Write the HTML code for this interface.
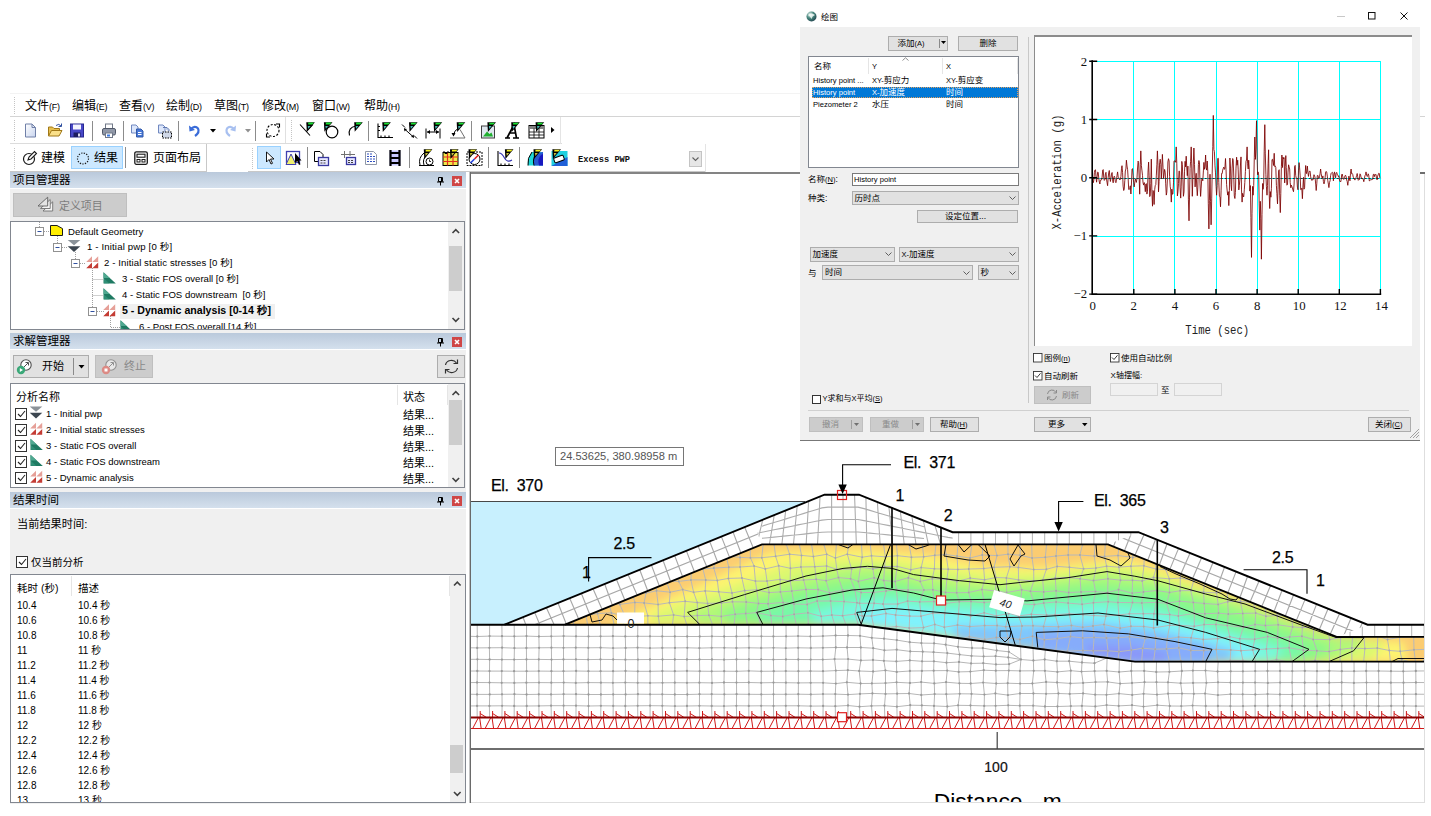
<!DOCTYPE html>
<html lang="zh-CN">
<head>
<meta charset="utf-8">
<title>GeoStudio</title>
<style>
*{box-sizing:border-box}
html,body{margin:0;padding:0}
body{width:1431px;height:816px;position:relative;overflow:hidden;background:#fff;
 font-family:"Liberation Sans","Noto Sans CJK SC",sans-serif;font-size:11px;color:#000}
.abs{position:absolute}
.t{position:absolute;white-space:nowrap;line-height:1}
.hdr{position:absolute;left:10px;width:456px;height:17px;background:linear-gradient(#bac9db,#d4e0ed 94%,#fff 94%);}
.hdr .t{left:3px;top:3px;font-size:11.5px}
.close{position:absolute;left:442px;top:4px;width:10px;height:10px;background:#cf4646}
.pin{position:absolute;left:427px;top:5px;width:7px;height:9px}
.box{position:absolute;background:#fff;border:1px solid #828790}
.btn{position:absolute;background:#e1e1e1;border:1px solid #adadad}
.btn.dis{background:#cccccc;border-color:#bfbfbf;color:#838383}
.sb{position:absolute;background:#f0f0f0}
.thumb{position:absolute;background:#cdcdcd}
.sep{position:absolute;width:1px;background:#a0a0a0}
.grip{position:absolute;width:1px;border-left:1px dotted #c4c4c4}
#dlg small{font-size:7.5px}
</style>
</head>
<body>
<!-- ===== main window: menu + toolbars ===== -->
<div class="abs" style="left:10px;top:93px;width:1421px;height:79px;background:#fff"></div>
<div class="abs" style="left:10px;top:93px;width:1415px;height:1px;background:#f3f3f3"></div>
<div class="abs" style="left:10px;top:116px;width:1415px;height:1px;background:#d4d4d4"></div>
<div class="abs" style="left:10px;top:143px;width:552px;height:1px;background:#dcdcdc"></div>
<div class="abs" style="left:10px;top:171px;width:197px;height:1px;background:#c8c8c8"></div>
<div class="abs" style="left:206px;top:144px;width:1px;height:28px;background:#c8c8c8"></div>
<div class="abs" style="left:248px;top:171px;width:458px;height:1px;background:#c8c8c8"></div>
<div class="abs" style="left:560px;top:117px;width:1px;height:27px;background:#e4e4e4"></div>
<div class="abs" style="left:705px;top:144px;width:1px;height:28px;background:#e4e4e4"></div>
<div class="grip" style="left:14px;top:97px;height:17px"></div>
<div class="grip" style="left:14px;top:120px;height:21px"></div>
<div class="grip" style="left:14px;top:148px;height:21px"></div>
<div class="grip" style="left:291px;top:120px;height:21px"></div>
<div class="grip" style="left:252px;top:148px;height:21px"></div>
<div id="menu" style="font-size:12px">
<span class="t" style="left:25px;top:100px">文件<small>(F)</small></span>
<span class="t" style="left:72px;top:100px">编辑<small>(E)</small></span>
<span class="t" style="left:119px;top:100px">查看<small>(V)</small></span>
<span class="t" style="left:166px;top:100px">绘制<small>(D)</small></span>
<span class="t" style="left:214px;top:100px">草图<small>(T)</small></span>
<span class="t" style="left:262px;top:100px">修改<small>(M)</small></span>
<span class="t" style="left:312px;top:100px">窗口<small>(W)</small></span>
<span class="t" style="left:364px;top:100px">帮助<small>(H)</small></span>
</div>
<style>#menu small{font-size:9px;letter-spacing:-.2px}</style>
<!-- ===== toolbar icons ===== -->
<svg class="abs" style="left:0;top:116px" width="720" height="56" viewBox="0 116 720 56" shape-rendering="auto">
<defs>
<g id="pg"><path d="M0,0 H8.600 L0.500,9.600 Z" fill="#000"/><path d="M2,0.400 H7.600 L6,2.300 H1.800 Z" fill="#18e030"/><path d="M1.500,3.800 H4.300 L1.900,6.600 Z" fill="#48b8b8"/></g>
<g id="py"><path d="M0,0 H8.600 L0.500,9.600 Z" fill="#000"/><path d="M2,0.400 H7.600 L6,2.300 H1.800 Z" fill="#f4f020"/><path d="M1.500,3.800 H4.300 L1.900,6.600 Z" fill="#c8c040"/></g>
<linearGradient id="gdoc" x1="0" y1="0" x2="1" y2="1"><stop offset="0" stop-color="#fff"/><stop offset="1" stop-color="#c8d4ee"/></linearGradient>
</defs>
<!-- row 1 -->
<g transform="translate(22,122.5)"><path d="M3.5,1.5 H10 L13.5,5 V14.5 H3.5 Z" fill="url(#gdoc)" stroke="#7080a8" stroke-width="1"/><path d="M10,1.5 V5 H13.5" fill="none" stroke="#7080a8"/></g>
<g transform="translate(47,122.5)"><path d="M1.5,13.5 V4.5 H5.5 L7,6 H12.5 V8" fill="#e8c050" stroke="#a07818"/><path d="M1.5,13.5 L4.5,8 H15 L12,13.5 Z" fill="#fae08a" stroke="#a07818"/><path d="M9,3 Q12,0.5 14,3.5 M14.5,1 V4 H11.5" fill="none" stroke="#3050a0" stroke-width="1"/></g>
<g transform="translate(69,122.5)"><rect x="1.5" y="1.5" width="13" height="13" fill="#4848c8" stroke="#282890"/><rect x="4" y="2" width="8" height="5" fill="#f4f4ff"/><rect x="4.5" y="10" width="7" height="4.5" fill="#1c1c60"/><rect x="9" y="11" width="2" height="3" fill="#dcdcf0"/></g>
<line x1="92.5" y1="121" x2="92.5" y2="141" stroke="#8c8c8c"/>
<g transform="translate(101,122.5)"><rect x="4.5" y="1.5" width="7" height="5" fill="#fff" stroke="#707888"/><rect x="1.5" y="6" width="13" height="6.5" rx="1.5" fill="#9098a8" stroke="#505868"/><rect x="4.5" y="10.5" width="7" height="4.5" fill="#fff" stroke="#707888"/><rect x="6" y="12" width="3" height="2" fill="#3878e0"/></g>
<line x1="123.5" y1="121" x2="123.5" y2="141" stroke="#8c8c8c"/>
<g transform="translate(129,122.5)"><path d="M2.5,2.5 H7 L9,4.5 V10.5 H2.5 Z" fill="#dce6fa" stroke="#7088c0"/><path d="M7.5,6.5 H12 L14,8.5 V14.5 H7.5 Z" fill="#4878d8" stroke="#3058a8"/><path d="M9,10 H12.5 M9,12 H12.5" stroke="#fff"/></g>
<g transform="translate(157,122.5)"><path d="M1.5,2.5 H6 L8,4.5 V10.5 H1.5 Z" fill="#dce6fa" stroke="#7088c0"/><path d="M6,5 H10 L12,7 V9" fill="#b8c8e8" stroke="#6078b0"/><rect x="5.5" y="9.5" width="9" height="6" fill="#d0d8e8" stroke="#000" stroke-dasharray="1.5 1"/></g>
<line x1="178.5" y1="121" x2="178.5" y2="141" stroke="#8c8c8c"/>
<g transform="translate(187,122.5)"><path d="M4,6.5 Q8,2.5 11,6 Q13,10 8,13.5" fill="none" stroke="#3a6cd8" stroke-width="2.2"/><path d="M2,3 L2.5,9 L8,7.5 Z" fill="#3a6cd8"/></g>
<path d="M210,129 h6 l-3,3.5 z" fill="#000"/>
<g transform="translate(222,122.5)"><path d="M12,6.5 Q8,2.5 5,6 Q3,10 8,13.5" fill="none" stroke="#a8c0f0" stroke-width="2.2"/><path d="M14,3 L13.5,9 L8,7.5 Z" fill="#a8c0f0"/></g>
<path d="M245,129 h6 l-3,3.5 z" fill="#909090"/>
<line x1="255.5" y1="121" x2="255.5" y2="141" stroke="#8c8c8c"/>
<g transform="translate(265,122.5)"><circle cx="8" cy="8" r="6" fill="none" stroke="#000" stroke-width="1.1" stroke-dasharray="2 1.6"/><path d="M11,1.5 h3.5 v3.5 M5,14.5 H1.5 V11" fill="none" stroke="#000" stroke-width="1.1"/></g>
<line x1="285.500" y1="117" x2="285.500" y2="143" stroke="#e0e0e0"/>
<g transform="translate(299,122.5)"><path d="M1,2 L11,13 M7.5,9 L14,2" stroke="#000" stroke-width="1.1" fill="none"/><use href="#pg" x="7.3" y="-0.3"/></g>
<g transform="translate(324,122.5)"><circle cx="8" cy="9.5" r="5.8" fill="none" stroke="#000" stroke-width="1.2"/><use href="#pg" x="-0.1" y="-0.3"/></g>
<g transform="translate(347,122.5)"><path d="M2.5,13 Q0.5,5 9,3.5" stroke="#000" stroke-width="1.1" fill="none"/><use href="#pg" x="7.2" y="-0.3"/></g>
<line x1="368.500" y1="121" x2="368.500" y2="141" stroke="#8c8c8c"/>
<g transform="translate(377,122.5)"><path d="M1,1 V15 H16 M4,15 v-2 M8,15 v-2 M12,15 v-2 M1,4 h2 M1,8 h2" stroke="#000" stroke-width="1.1" fill="none"/><use href="#pg" x="5.3" y="-0.2"/></g>
<g transform="translate(401,122.5)"><path d="M1,2 L4,5 M13,13 L16,16 M3,6 L13,15" stroke="#000" fill="none"/><path d="M3,6 l3,.5 l-2.5,2.5 z M13,15 l-3,-.5 l2.500,-2.500 z" fill="#000"/><use href="#pg" x="8" y="-0.2"/></g>
<g transform="translate(425,122.5)"><path d="M1,6 V16 M15,6 V16 M2,9.500 H14" stroke="#000" fill="none"/><path d="M2,9.500 l3,-2 v4 z M14,9.500 l-3,-2 v4 z" fill="#000"/><use href="#pg" x="8.6" y="-0.2"/></g>
<g transform="translate(449,122.5)"><path d="M1,15.500 H16 L11,7" stroke="#707070" fill="none"/><path d="M9,6 Q5,8 4.500,13" stroke="#000" fill="none"/><path d="M4.500,14 l-2,-3.500 h4 z" fill="#000"/><use href="#pg" x="7.7" y="-0.2"/></g>
<line x1="471.500" y1="121" x2="471.500" y2="141" stroke="#8c8c8c"/>
<g transform="translate(480,122.5)"><rect x="1.500" y="3.500" width="13" height="12" fill="#e0e8f0" stroke="#404040"/><path d="M3,14 L7,9 L9.500,11.500 L11.500,10 L13,14 Z" fill="#20b030"/><use href="#pg" x="7.4" y="-0.2"/></g>
<g transform="translate(504,122.5)"><path d="M1,15.500 h5 M9,15.500 h6 M3,15.500 L10,2 L12.500,15.500 M5.500,10.500 h6" stroke="#000" stroke-width="1.700" fill="none"/><use href="#pg" x="7.2" y="-0.2"/></g>
<g transform="translate(528,122.5)"><rect x="1" y="3" width="15" height="12.500" fill="#fff" stroke="#000"/><rect x="1.500" y="3.500" width="14" height="3" fill="#808080"/><path d="M1,9.500 h15 M1,12.500 h15 M6,6 v9.500 M11,6 v9.500" stroke="#000" stroke-width=".8"/><use href="#pg" x="7.6" y="-0.2"/></g>
<path d="M551,127 l3.500,3 l-3.500,3 z" fill="#000"/>
<!-- row 2 -->
<rect x="71.500" y="146.500" width="51" height="22" fill="#cce8ff" stroke="#99d1ff"/>
<g transform="translate(22,150)"><circle cx="7" cy="9" r="5.500" fill="none" stroke="#1a1a1a" stroke-width="1.200"/><path d="M6,10 L7,7 L12.500,1.500 L14.500,3.500 L9,9 Z" fill="#fff" stroke="#1a1a1a" stroke-width="1.100"/></g>
<circle cx="83" cy="158.500" r="5.500" fill="none" stroke="#1a1a1a" stroke-width="1.200" stroke-dasharray="1.300 1.300"/>
<line x1="125.500" y1="147" x2="125.500" y2="168" stroke="#8c8c8c"/>
<g transform="translate(133,150)"><rect x="1.800" y="1.800" width="12.500" height="12.500" rx="1.500" fill="#fff" stroke="#1a1a1a" stroke-width="1.300"/><rect x="4" y="4.200" width="8" height="3" fill="none" stroke="#1a1a1a" stroke-width="1.100"/><rect x="4" y="9.500" width="3" height="2.500" fill="none" stroke="#1a1a1a"/><rect x="9" y="9.500" width="3" height="2.500" fill="none" stroke="#1a1a1a"/></g>
<rect x="257.500" y="146.500" width="23" height="22" fill="#cce8ff" stroke="#99d1ff"/>
<g transform="translate(261,150)"><path d="M5.500,2 V12 L8,9.500 L10,14 L11.500,13.300 L9.500,9 H13 Z" fill="#fff" stroke="#000" stroke-width=".9"/></g>
<g transform="translate(285,150)"><rect x="1.500" y="1.500" width="13" height="11" fill="#fff" stroke="#4040b0" stroke-width="1.300"/><path d="M1,14.500 L6,4 L11,14.500 Z" fill="#f0f070" stroke="#4040b0"/><path d="M10,3 V13 L12.300,11 L14,15 L15.500,14.300 L13.800,10.500 H16.500 Z" fill="#000"/></g>
<line x1="307.500" y1="147" x2="307.500" y2="168" stroke="#8c8c8c"/>
<g transform="translate(313,150)"><path d="M1.500,1.500 H7 L10,4.500 V11.500 H1.500 Z" fill="#fff" stroke="#000"/><rect x="5.500" y="7.500" width="10" height="8" fill="#e8e8ff" stroke="#3838a0" stroke-width="1.300"/><path d="M7.500,10.500 h6 M7.500,13 h6" stroke="#404040" stroke-dasharray="2 1"/></g>
<g transform="translate(340,150)"><path d="M1,4.500 H15 M4.500,1 V8 M10,1 V6" stroke="#707070"/><rect x="6.500" y="7.500" width="9" height="7" fill="#e8e8ff" stroke="#3838a0" stroke-width="1.300"/><path d="M8,10.500 h6 M8,12.500 h6" stroke="#404040" stroke-dasharray="2 1"/></g>
<g transform="translate(363,150)"><path d="M2.500,1.500 H10.500 L13.500,4.500 V14.500 H2.500 Z" fill="#fff" stroke="#9098a8"/><path d="M4,4 h5 M4,6.500 h8 M4,9 h8 M4,11.500 h8" stroke="#3050c0" stroke-dasharray="2 1"/></g>
<g transform="translate(387,150)"><rect x="2.500" y="0.500" width="11" height="15" fill="#c8c8ff"/><path d="M3.500,0 V16 M12.500,0 V16" stroke="#000" stroke-width="2.200"/><path d="M4,3 H12 M4,8 H12 M4,13 H12" stroke="#000" stroke-width="1.800"/></g>
<line x1="409.500" y1="147" x2="409.500" y2="168" stroke="#8c8c8c"/>
<g transform="translate(418,150)"><path d="M2,15 Q0,8 6,3 M6,15 Q4,9 9,5 M1,15.500 H16" stroke="#000" fill="none"/><circle cx="11.500" cy="11.500" r="3.500" fill="#fff" stroke="#000"/><path d="M11.500,9.500 v2 h1.500" stroke="#000" fill="none" stroke-width=".8"/><use href="#py" x="5.8" y="-0.7"/></g>
<g transform="translate(442,150)"><rect x="1" y="2.500" width="15" height="13" fill="#f0e84a" stroke="#000"/><path d="M1,7 H16 M1,11.500 H16 M5.500,2.500 V15.500 M11,2.500 V15.500" stroke="#e03020" stroke-width="1.200"/><path d="M1,2 h2 v1.500 h2 v-1.500 h2" stroke="#000" fill="none"/><use href="#py" x="8" y="-0.7"/></g>
<g transform="translate(466,150)"><rect x="1" y="2" width="15" height="13.500" fill="#fff" stroke="#000" stroke-dasharray="2 1"/><circle cx="8.500" cy="9" r="5.500" fill="none" stroke="#000"/><path d="M4.500,13 L8.500,9" stroke="#2040e0" stroke-width="1.600"/><path d="M8.500,9 L12.500,5" stroke="#e02020" stroke-width="1.600"/><use href="#py" x="2.5" y="-0.7"/></g>
<line x1="488.500" y1="147" x2="488.500" y2="168" stroke="#8c8c8c"/>
<g transform="translate(497,150)"><path d="M1,1 V15.500 H16 M4,15.500 v-2 M8,15.500 v-2 M12,15.500 v-2" stroke="#000" fill="none" stroke-width="1.100"/><path d="M2,3 Q5,3 7.500,8 Q10,13 15,10" stroke="#3030b0" fill="none" stroke-width="1.100"/><use href="#py" x="7.9" y="-0.7"/></g>
<line x1="519.500" y1="147" x2="519.500" y2="168" stroke="#8c8c8c"/>
<g transform="translate(527,150)"><path d="M1,15.500 Q0,8 5,2 H16 V15.500 Z" fill="#20d8d8"/><path d="M7,15.500 Q5,8 10,3 L16,2 V15.500 Z" fill="#2858d0"/><path d="M12,15.500 Q10,9 14,5 L16,4 V15.500 Z" fill="#1818c0"/><path d="M1,15.500 Q0,8 5,2 M7,15.500 Q5,8 10,3" stroke="#000" fill="none"/><use href="#py" x="6.5" y="-0.7"/></g>
<g transform="translate(551,150)"><rect x="0.500" y="1" width="16" height="15" fill="#20d0e0"/><path d="M0.500,16 L16.500,7 V16 Z" fill="#2060d8"/><rect x="3" y="6.500" width="10" height="5" rx="1" fill="#fff" stroke="#000" transform="rotate(-20 8 9)"/><use href="#py" x="1.4" y="-0.7"/></g>
<text x="578" y="162" font-family="'Liberation Mono',monospace" font-size="9.5" font-weight="bold" textLength="52" lengthAdjust="spacingAndGlyphs" fill="#111">Excess PWP</text>
<rect x="689.500" y="151.500" width="12" height="15" fill="#e6e6e6" stroke="#c4c4c4"/>
<path d="M692.500,157.500 l3,3 l3,-3" fill="none" stroke="#606060" stroke-width="1.100"/>
</svg>
<span class="t" style="left:41px;top:152px;font-size:12px">建模</span>
<span class="t" style="left:94px;top:152px;font-size:12px">结果</span>
<span class="t" style="left:153px;top:152px;font-size:12px">页面布局</span>
<!-- ===== left docking panels ===== -->
<div class="abs" style="left:10px;top:172px;width:456px;height:632px;background:#f0f0f0"></div>
<!-- project manager -->
<div class="hdr" style="top:172px"><span class="t">项目管理器</span>
<svg class="pin" viewBox="0 0 7 9"><path d="M1.500,0.500 H5.500 V4.500 H1.500 Z M4.500,0.500 V4.500 M0,5 H7 M3.500,5 V8.500" stroke="#000" stroke-width="1" fill="none"/></svg>
<div class="close"><svg width="10" height="10" viewBox="0 0 10 10"><path d="M3,3 L7,7 M7,3 L3,7" stroke="#fff" stroke-width="1.600"/></svg></div></div>
<div class="btn dis" style="left:13px;top:193px;width:114px;height:24px"></div>
<svg class="abs" style="left:37px;top:196px" width="18" height="18" viewBox="0 0 18 18"><path d="M6,15 H15.700 V5.800 Z" fill="#f4f4f4" stroke="#707070" stroke-width=".9"/><path d="M3.500,12.500 H13.200 V3.500 Z" fill="#f4f4f4" stroke="#707070" stroke-width=".9"/><path d="M1,10 L10.700,1.200 V10 Z" fill="#e4e4e4" stroke="#606060" stroke-width=".9"/></svg>
<span class="t" style="left:59px;top:200.5px;font-size:10.9px;color:#7c7c7c">定义项目</span>
<div class="box" style="left:10px;top:221px;width:455px;height:109px;border-color:#828790;overflow:hidden" id="tree">
 <div class="sb" style="left:437px;top:0;width:17px;height:107px"></div>
 <div class="thumb" style="left:438px;top:24px;width:13px;height:45px"></div>
 <svg class="abs" style="left:437px;top:0" width="17" height="107"><path d="M4.500,11 l3.300,-3.300 l3.300,3.300 M4.500,96 l3.300,3.300 l3.300,-3.300" fill="none" stroke="#404040" stroke-width="1.600"/></svg>
 <div class="abs" style="left:109px;top:82px;width:155px;height:15px;background:#f0f0f0"></div>
 <svg class="abs" style="left:0;top:0" width="437" height="107" viewBox="11 222 437 107">
  <g stroke="#a0a0a0" stroke-dasharray="1 1" fill="none">
   <path d="M39.500,222 V227 M44,231.500 H50 M57.500,236 V243 M62,247.500 H68 M75.500,252 V259 M80,263.500 H86 M92.500,268 V307 M92.500,279.500 H103 M92.500,295.500 H103 M97,311.500 H104 M110.500,316 V327.500 H120"/>
  </g>
  <g fill="#fff" stroke="#919191"><rect x="35.500" y="227.500" width="8" height="8"/><rect x="53.500" y="243.500" width="8" height="8"/><rect x="71.500" y="259.500" width="8" height="8"/><rect x="88.500" y="307.500" width="8" height="8"/></g>
  <path d="M37.500,231.500 h4 M55.500,247.500 h4 M73.500,263.500 h4 M90.500,311.500 h4" stroke="#3050a0"/>
  <path d="M50.500,225.500 H57 L62.500,228.600 V235.500 H50.500 Z" fill="#ffee00" stroke="#1a1a1a" stroke-width="1"/>
  <g id="ic1"><path d="M67.700,240 H80.300 L74,245.300 Z" fill="#8a9299"/><path d="M67.700,246.200 H80.300 L74,252 Z" fill="#3c4650"/></g>
  <g id="ic2"><path d="M86.200,262 H92 V256.200 Z M92.400,262 H98.200 V256.200 Z" fill="#e6a098"/><path d="M86.200,268.200 H92 V262.400 Z M92.400,268.200 H98.200 V262.400 Z" fill="#c43c34"/><path d="M93.600,264.800 L96.400,262.400 H93.600 Z" fill="#fff"/></g>
  <g id="ic3"><path d="M103.500,272.300 V283.600 H115.800 Z" fill="#1e7a62"/><path d="M103.500,272.300 V278 H109.600 Z" fill="#4fa890"/><path d="M104,278.400 V283.200 H109.200 Z" fill="#2f8f76"/></g>
  <use href="#ic3" y="16"/>
  <use href="#ic2" x="17" y="48"/>
  <use href="#ic3" x="17" y="48"/>
 </svg>
 <span class="t" style="left:57px;top:5px;font-size:9.6px">Default Geometry</span>
 <span class="t" style="left:76px;top:20px;font-size:9.6px;letter-spacing:.15px">1 - Initial pwp [0 秒]</span>
 <span class="t" style="left:93px;top:36px;font-size:9.6px;letter-spacing:.1px">2 - Initial static stresses [0 秒]</span>
 <span class="t" style="left:111px;top:52px;font-size:9.6px">3 - Static FOS overall [0 秒]</span>
 <span class="t" style="left:111px;top:68px;font-size:9.6px">4 - Static FOS downstream&nbsp; [0 秒]</span>
 <span class="t" style="left:111px;top:83px;font-size:10.6px;font-weight:bold">5 - Dynamic analysis [0-14 秒]</span>
 <span class="t" style="left:128px;top:100px;font-size:9.6px">6 - Post FOS overall [14 秒]</span>
</div>
<!-- solve manager -->
<div class="hdr" style="top:333px"><span class="t">求解管理器</span>
<svg class="pin" viewBox="0 0 7 9"><path d="M1.500,0.500 H5.500 V4.500 H1.500 Z M4.500,0.500 V4.500 M0,5 H7 M3.500,5 V8.500" stroke="#000" stroke-width="1" fill="none"/></svg>
<div class="close"><svg width="10" height="10" viewBox="0 0 10 10"><path d="M3,3 L7,7 M7,3 L3,7" stroke="#fff" stroke-width="1.600"/></svg></div></div>
<div class="btn" style="left:13px;top:355px;width:76px;height:23px"></div>
<div class="abs" style="left:73px;top:358px;width:1px;height:17px;background:#8a8a8a"></div>
<svg class="abs" style="left:13px;top:355px" width="80" height="23" viewBox="13 355 80 23"><circle cx="26" cy="365" r="5.200" fill="#fff" stroke="#505050" stroke-width="1.100"/><path d="M24,367 L28,363 M25.500,362.500 H28.500 V365.500" stroke="#505050" fill="none"/><circle cx="21" cy="370" r="4.2" fill="#3aa878"/><path d="M19.800,368 V372 L23,370 Z" fill="#fff"/><path d="M78.500,365 h6 l-3,3.500 z" fill="#000"/></svg>
<span class="t" style="left:42px;top:361px;font-size:11px">开始</span>
<div class="btn dis" style="left:95px;top:355px;width:58px;height:23px"></div>
<svg class="abs" style="left:95px;top:355px" width="30" height="23" viewBox="95 355 30 23"><circle cx="111" cy="365" r="5.200" fill="#e8e8e8" stroke="#909090" stroke-width="1.100"/><path d="M109,367 L113,363 M110.500,362.500 H113.500 V365.500" stroke="#909090" fill="none"/><circle cx="106" cy="370" r="4.2" fill="#dc8a84"/><rect x="104.500" y="368.500" width="3" height="3" fill="#fff"/></svg>
<span class="t" style="left:124px;top:361px;font-size:11px;color:#8a8a8a">终止</span>
<div class="btn" style="left:437px;top:355px;width:28px;height:23px"></div>
<svg class="abs" style="left:439px;top:355px" width="25" height="23" viewBox="0 0 25 23"><path d="M6.500,10 A6,5.500 0 0 1 17.500,8 M18.500,13 A6,5.500 0 0 1 7.500,15" fill="none" stroke="#303030" stroke-width="1.200"/><path d="M18.500,4.500 V8.500 H14.500 M6.500,18.500 V14.500 H10.500" fill="none" stroke="#303030" stroke-width="1.200"/></svg>
<div class="box" style="left:10px;top:383px;width:455px;height:105px;overflow:hidden" id="solve">
 <div class="sb" style="left:437px;top:0;width:17px;height:103px"></div>
 <div class="thumb" style="left:438px;top:16px;width:13px;height:45px"></div>
 <svg class="abs" style="left:437px;top:0" width="17" height="103"><path d="M4.500,11 l3.300,-3.300 l3.300,3.300 M4.500,94 l3.300,3.300 l3.300,-3.300" fill="none" stroke="#404040" stroke-width="1.600"/></svg>
 <div class="abs" style="left:386px;top:1px;width:1px;height:20px;background:#e5e5e5"></div>
 <div class="abs" style="left:436px;top:1px;width:1px;height:20px;background:#e5e5e5"></div>
 <span class="t" style="left:5px;top:8px;font-size:11px">分析名称</span>
 <span class="t" style="left:392px;top:8px;font-size:11px">状态</span>
 <svg class="abs" style="left:0;top:0" width="60" height="103" viewBox="11 384 60 103">
  <g id="cb"><rect x="15.500" y="408.500" width="11" height="11" fill="#fff" stroke="#333"/><path d="M18,414 l2.500,2.500 l4.500,-5.500" fill="none" stroke="#222" stroke-width="1.100"/></g>
  <use href="#cb" y="16"/><use href="#cb" y="32"/><use href="#cb" y="48"/><use href="#cb" y="64"/>
  <use href="#ic1" x="-38" y="166.500"/>
  <use href="#ic2" x="-56" y="166.500"/>
  <use href="#ic3" x="-73" y="166.500"/>
  <use href="#ic3" x="-73" y="182.500"/>
  <use href="#ic2" x="-56" y="214.500"/>
 </svg>
 <span class="t" style="left:35px;top:25px;font-size:9.5px">1 - Initial pwp</span>
 <span class="t" style="left:35px;top:41px;font-size:9.5px">2 - Initial static stresses</span>
 <span class="t" style="left:35px;top:57px;font-size:9.5px">3 - Static FOS overall</span>
 <span class="t" style="left:35px;top:73px;font-size:9.5px">4 - Static FOS downstream</span>
 <span class="t" style="left:35px;top:89px;font-size:9.5px">5 - Dynamic analysis</span>
 <span class="t" style="left:392px;top:26px;font-size:11px">结果...</span>
 <span class="t" style="left:392px;top:42px;font-size:11px">结果...</span>
 <span class="t" style="left:392px;top:58px;font-size:11px">结果...</span>
 <span class="t" style="left:392px;top:74px;font-size:11px">结果...</span>
 <span class="t" style="left:392px;top:90px;font-size:11px">结果...</span>
</div>
<!-- result times -->
<div class="hdr" style="top:492px"><span class="t">结果时间</span>
<svg class="pin" viewBox="0 0 7 9"><path d="M1.500,0.500 H5.500 V4.500 H1.500 Z M4.500,0.500 V4.500 M0,5 H7 M3.500,5 V8.500" stroke="#000" stroke-width="1" fill="none"/></svg>
<div class="close"><svg width="10" height="10" viewBox="0 0 10 10"><path d="M3,3 L7,7 M7,3 L3,7" stroke="#fff" stroke-width="1.600"/></svg></div></div>
<span class="t" style="left:17px;top:518.5px;font-size:11.2px">当前结果时间:</span>
<svg class="abs" style="left:16px;top:556px" width="13" height="13"><rect x=".5" y=".5" width="11" height="11" fill="#fff" stroke="#333"/><path d="M3,6 l2.500,2.500 l4.500,-5.500" fill="none" stroke="#222" stroke-width="1.100"/></svg>
<span class="t" style="left:31px;top:557px;font-size:10.500px">仅当前分析</span>
<div class="box" style="left:10px;top:574px;width:456px;height:229px;overflow:hidden" id="times">
 <div class="sb" style="left:439px;top:0;width:16px;height:227px"></div>
 <div class="thumb" style="left:439px;top:170px;width:13px;height:28px"></div>
 <svg class="abs" style="left:438px;top:0" width="17" height="227"><path d="M5,10.500 l3.300,-3.300 l3.300,3.300 M5,217 l3.300,3.300 l3.300,-3.300" fill="none" stroke="#404040" stroke-width="1.600"/></svg>
 <div class="abs" style="left:60px;top:1px;width:1px;height:20px;background:#e5e5e5"></div>
 <div class="abs" style="left:438px;top:1px;width:1px;height:20px;background:#e5e5e5"></div>
 <span class="t" style="left:6px;top:8px;font-size:10.500px">耗时 (秒)</span>
 <span class="t" style="left:67px;top:8px;font-size:10.500px">描述</span>
 <div id="trows" style="font-size:10px">
 <span class="t" style="left:6px;top:26px">10.4</span><span class="t" style="left:67px;top:26px">10.4 秒</span>
 <span class="t" style="left:6px;top:41px">10.6</span><span class="t" style="left:67px;top:41px">10.6 秒</span>
 <span class="t" style="left:6px;top:56px">10.8</span><span class="t" style="left:67px;top:56px">10.8 秒</span>
 <span class="t" style="left:6px;top:71px">11</span><span class="t" style="left:67px;top:71px">11 秒</span>
 <span class="t" style="left:6px;top:86px">11.2</span><span class="t" style="left:67px;top:86px">11.2 秒</span>
 <span class="t" style="left:6px;top:101px">11.4</span><span class="t" style="left:67px;top:101px">11.4 秒</span>
 <span class="t" style="left:6px;top:116px">11.6</span><span class="t" style="left:67px;top:116px">11.6 秒</span>
 <span class="t" style="left:6px;top:131px">11.8</span><span class="t" style="left:67px;top:131px">11.8 秒</span>
 <span class="t" style="left:6px;top:146px">12</span><span class="t" style="left:67px;top:146px">12 秒</span>
 <span class="t" style="left:6px;top:161px">12.2</span><span class="t" style="left:67px;top:161px">12.2 秒</span>
 <span class="t" style="left:6px;top:176px">12.4</span><span class="t" style="left:67px;top:176px">12.4 秒</span>
 <span class="t" style="left:6px;top:191px">12.6</span><span class="t" style="left:67px;top:191px">12.6 秒</span>
 <span class="t" style="left:6px;top:206px">12.8</span><span class="t" style="left:67px;top:206px">12.8 秒</span>
 <span class="t" style="left:6px;top:221px">13</span><span class="t" style="left:67px;top:221px">13 秒</span>
 </div>
</div>
<!-- ===== drawing canvas ===== -->
<div class="abs" style="left:469px;top:172px;width:956px;height:631px;background:#fff"></div>
<div class="abs" style="left:469px;top:172px;width:956px;height:2px;background:#848484"></div>
<div class="abs" style="left:469px;top:172px;width:1px;height:631px;background:#c4c4c4"></div>
<div class="abs" style="left:470px;top:172px;width:1px;height:631px;background:#6a6a6a"></div>
<div class="abs" style="left:1424px;top:174px;width:1px;height:629px;background:#dedede"></div>
<div class="abs" style="left:471px;top:802px;width:954px;height:1px;background:#dedede"></div>
<svg class="abs" style="left:471px;top:174px" width="953" height="628" viewBox="471 174 953 628" font-family="'Liberation Sans',sans-serif">
<defs>
<clipPath id="czone"><polygon points="565.0,624.7 762.0,544.4 1108.0,544.4 1336.6,636.9 1424.0,636.9 1424.0,661.6 1134.8,661.6 858.0,624.7"/></clipPath>
<clipPath id="cup"><polygon points="504.5,624.7 753.5,523.4 762.0,544.4 565.0,624.7"/></clipPath>
<clipPath id="ccap"><polygon points="753.5,523.4 824.5,494.7 859.0,494.7 952.6,532.2 952.6,544.4 762.0,544.4"/></clipPath>
<clipPath id="cberm"><polygon points="952.6,532.2 1138.4,532.2 1108.0,544.4 952.6,544.4"/></clipPath>
<clipPath id="cdn"><polygon points="1138.4,532.2 1367.6,624.7 1337.2,636.9 1108.0,544.4"/></clipPath>
<clipPath id="crf"><polygon points="1367.6,624.7 1424.0,624.7 1424.0,636.9 1336.6,636.9"/></clipPath>
<clipPath id="cfo"><polygon points="470.0,624.7 858.0,624.7 1134.8,661.6 1424.0,661.6 1424.0,717.5 470.0,717.5"/></clipPath>
<filter id="bl" x="-20%" y="-20%" width="140%" height="140%"><feGaussianBlur stdDeviation="4.5"/></filter>
<filter id="bl2" x="-20%" y="-20%" width="140%" height="140%"><feGaussianBlur stdDeviation="3.5"/></filter>
</defs>
<polygon points="470.0,501.5 807.8,501.5 504.5,624.7 470.0,624.7" fill="#c8f0fe"/>
<path d="M471,501.5 H805" stroke="#484848" stroke-width="1" fill="none"/>
<g clip-path="url(#czone)">
<polygon points="565.0,624.7 762.0,544.4 1108.0,544.4 1336.6,636.9 1424.0,636.9 1424.0,661.6 1134.8,661.6 858.0,624.7" fill="#fbcc72"/>
<g filter="url(#bl)">
<polygon points="606.0,624.7 700.0,585.0 770.0,552.0 860.0,549.0 930.0,555.0 985.0,566.0 1050.0,567.0 1100.0,561.0 1132.0,560.0 1165.0,570.0 1235.0,598.0 1300.0,624.0 1336.6,638.0 1375.0,640.0 1404.0,642.0 1408.0,661.6 1134.8,661.6 858.0,624.7" fill="#fdf470"/>
<polygon points="650.0,624.7 655.0,612.0 720.0,590.0 790.0,564.0 850.0,558.5 900.0,561.0 930.0,566.0 985.0,574.0 1050.0,573.0 1105.0,566.0 1135.0,568.0 1162.0,575.0 1220.0,594.0 1270.0,612.0 1320.0,632.0 1345.0,640.0 1385.0,640.0 1380.0,652.0 1368.0,661.6 1134.8,661.6 858.0,624.7" fill="#dcf870"/>
<polygon points="687.6,612.4 744.5,594.6 806.0,576.0 843.0,568.4 867.5,566.3 892.0,568.4 913.6,574.6 959.7,580.7 1000.0,584.7 1020.8,582.4 1067.0,577.8 1107.0,571.6 1134.8,576.2 1158.0,580.8 1205.7,594.0 1245.0,604.0 1300.0,624.5 1336.0,637.5 1364.0,637.6 1353.6,650.8 1329.0,661.6 1134.8,661.6 858.0,624.7 700.0,624.7" fill="#b0f878"/>
<polygon points="720.0,612.0 780.0,594.0 830.0,582.0 870.0,577.0 900.0,581.0 930.0,588.0 1000.0,592.0 1100.0,583.0 1160.0,588.0 1220.0,605.0 1290.0,630.0 1335.0,648.0 1310.0,661.6 1134.8,661.6 858.0,624.7 730.0,624.7" fill="#8cf888"/>
<polygon points="756.8,612.4 806.0,599.0 852.0,590.0 883.0,587.8 913.6,593.0 941.3,600.0 1000.0,599.2 1027.0,600.9 1107.0,593.2 1158.0,599.3 1205.7,617.8 1267.3,632.4 1309.0,649.3 1292.0,661.6 1134.8,661.6 858.0,624.7 763.0,624.7" fill="#78f8a8"/>
<polygon points="810.0,612.0 860.0,600.0 890.0,598.0 930.0,604.0 1000.0,608.0 1100.0,603.0 1158.0,610.0 1205.0,625.0 1285.0,650.0 1272.0,661.6 1134.8,661.6 858.0,624.7 815.0,624.7" fill="#78f8dc"/>
<polygon points="856.7,612.4 892.0,608.4 929.0,611.5 1000.0,617.6 1036.0,617.0 1098.0,613.0 1158.0,620.0 1205.7,632.4 1259.6,649.3 1252.0,661.6 1134.8,661.6 861.4,624.7" fill="#80f2fc"/>
<polygon points="950.0,626.0 1036.0,625.0 1100.0,622.0 1160.0,630.0 1235.0,650.0 1228.0,661.6 1134.8,661.6 960.0,640.0" fill="#80c6fc"/>
</g><g filter="url(#bl2)">
<polygon points="1036.2,632.4 1082.4,630.8 1128.7,633.9 1175.0,641.6 1212.0,649.3 1205.7,661.6 1134.8,661.6 1037.8,648.5" fill="#86acfb"/>
<polygon points="1085.0,645.0 1130.0,646.0 1168.0,654.0 1165.0,661.6 1134.8,661.6 1090.0,655.5" fill="#8a98f9"/>
</g></g>
<g clip-path="url(#cfo)"><path d="M464.8,624.7 L464.8,636.2 L464.9,647.7 L464.9,659.4 L464.7,671.1 L464.7,682.7 L464.7,694.1 L464.8,706 L464.8,717.5 M477.2,624.7 L477.3,636.5 L477.2,647.9 L477.4,659.3 L477.3,671 L477.1,682.5 L477.1,694.4 L477.1,705.9 L477.2,717.5 M489.6,624.7 L489.6,636.1 L489.4,647.8 L489.6,659.5 L489.5,671.1 L489.5,682.6 L489.7,694.4 L489.4,705.9 L489.6,717.5 M501.9,624.7 L502,636.2 L502.1,647.7 L501.9,659.6 L501.8,671.1 L501.7,682.8 L502,694.3 L502.1,705.8 L501.9,717.5 M514.2,624.7 L514.3,636.3 L514.4,648.1 L514.2,659.6 L514.1,671.2 L514.3,682.9 L514.4,694.2 L514.2,706 L514.2,717.5 M526.6,624.7 L526.5,636.1 L526.4,648 L526.5,659.4 L526.6,671.2 L526.4,682.7 L526.6,694.5 L526.7,706 L526.6,717.5 M539,624.7 L538.9,636.5 L539.1,647.8 L538.8,659.4 L538.8,671.1 L539,682.6 L538.8,694.3 L538.9,705.9 L539,717.5 M551.3,624.7 L551.3,636.3 L551.4,647.7 L551.5,659.6 L551.4,671.2 L551.3,682.7 L551.1,694.4 L551.1,705.7 L551.3,717.5 M563.7,624.7 L563.6,636.1 L563.5,647.8 L563.5,659.4 L563.5,671.2 L563.7,682.6 L563.6,694.2 L563.6,705.7 L563.7,717.5 M576,624.7 L576,636.3 L575.8,647.7 L575.9,659.4 L576.1,671 L575.8,682.9 L576,694.2 L576,705.7 L576,717.5 M588.4,624.7 L588.5,636.4 L588.3,647.8 L588.2,659.6 L588.4,671.2 L588.3,682.6 L588.5,694.5 L588.5,706 L588.4,717.5 M600.7,624.7 L600.6,636.3 L600.6,647.7 L600.5,659.4 L600.6,671.2 L600.9,682.7 L600.9,694.5 L600.9,705.8 L600.7,717.5 M613.1,624.7 L612.9,636.2 L613.1,648.1 L613.2,659.5 L613.1,671.2 L612.9,682.8 L613.2,694.4 L613.2,705.9 L613.1,717.5 M625.4,624.7 L625.3,636.4 L625.6,647.9 L625.4,659.7 L625.5,671 L625.3,682.6 L625.6,694.4 L625.3,706 L625.4,717.5 M637.8,624.7 L637.7,636.3 L637.6,647.7 L637.9,659.6 L637.8,671.3 L637.7,682.8 L637.9,694.2 L637.7,705.8 L637.8,717.5 M650.1,624.7 L650,636.3 L650,648.1 L650,659.5 L650.1,671.3 L650.1,682.9 L650.1,694.3 L650.1,705.7 L650.1,717.5 M662.5,624.7 L662.3,636.4 L662.3,647.9 L662.5,659.5 L662.4,671.1 L662.5,682.8 L662.3,694.3 L662.3,705.8 L662.5,717.5 M674.8,624.7 L674.8,636.4 L675,647.9 L674.8,659.5 L674.8,671.2 L674.8,682.7 L674.8,694.5 L674.9,706.1 L674.8,717.5 M687.2,624.7 L687.2,636.5 L687.3,647.8 L687,659.5 L687,671 L687,682.8 L687.3,694.5 L687,706 L687.2,717.5 M699.5,624.7 L699.7,636.5 L699.4,648.1 L699.5,659.5 L699.7,671.2 L699.4,682.7 L699.5,694.2 L699.4,705.8 L699.5,717.5 M711.9,624.7 L711.9,636.3 L711.7,647.8 L711.9,659.5 L711.7,671.3 L712,682.9 L711.7,694.2 L711.7,706 L711.9,717.5 M724.2,624.7 L724.2,636.5 L724.3,647.8 L724.1,659.7 L724.2,671.2 L724,682.5 L724.3,694.3 L724,706.1 L724.2,717.5 M736.6,624.7 L736.4,636.4 L736.4,648 L736.5,659.4 L736.6,671.3 L736.5,682.6 L736.6,694.2 L736.4,705.8 L736.6,717.5 M748.9,624.7 L748.8,636.2 L749,647.8 L748.9,659.4 L748.8,670.9 L748.8,682.5 L749,694.3 L748.8,705.9 L748.9,717.5 M761.3,624.7 L761.4,636.3 L761.2,648 L761.2,659.5 L761.3,671.3 L761.2,682.8 L761.3,694.4 L761.2,705.8 L761.3,717.5 M773.6,624.7 L773.4,636.4 L773.5,647.8 L773.4,659.6 L773.7,671.2 L773.5,682.6 L773.5,694.3 L773.5,705.9 L773.6,717.5 M786,624.7 L786.1,636.3 L785.8,648.1 L785.9,659.4 L785.8,671.1 L785.9,682.7 L785.8,694.3 L785.8,705.8 L786,717.5 M798.3,624.7 L798.1,636.1 L798.2,647.8 L798.3,659.5 L798.4,671.2 L798.4,682.9 L798.3,694.2 L798.5,705.8 L798.3,717.5 M810.7,624.7 L810.5,636.4 L810.8,648 L810.7,659.6 L810.5,671.1 L810.7,682.8 L810.8,694.4 L810.7,706.1 L810.7,717.5 M823,624.7 L822.9,636.1 L822.9,647.8 L822.8,659.6 L823,671.2 L823.1,682.8 L823,694.1 L823.1,706 L823,717.5 M835.4,624.7 L835.6,635.5 L835.8,647.5 L834.6,659.1 L835.8,670.6 L835.8,683.6 L835.3,694.1 L835.3,706.2 L835.4,717.5 M847.7,624.7 L848,635.5 L847.1,647.5 L848.1,659.1 L847.8,670.2 L846.9,682.3 L848,694.6 L848,705.5 L847.7,717.5 M860.1,625 L860,635.8 L860.8,647.5 L860.9,660.4 L859.2,671 L860.6,683.5 L860,693.9 L859.5,706.7 L860.1,717.5 M872.4,626.6 L871.8,637.8 L873.2,648.2 L873,660 L873.1,671.5 L871.9,683.4 L872.4,693.4 L871.5,705.9 L872.4,717.5 M884.8,628.3 L884.1,638.7 L884.4,650.3 L883.9,660.8 L885.4,670.4 L885.5,683.1 L885.5,693.9 L884.5,705.7 L884.8,717.5 M897.1,629.9 L896.8,640.1 L896.7,649.7 L896.4,661.4 L896.7,671.9 L896.6,682.3 L897.1,693.7 L896.9,706.7 L897.1,717.5 M909.5,631.6 L909.7,642.2 L910.2,651.4 L909.8,660.4 L909.9,671 L909.9,683 L909.1,693.5 L910.2,705.2 L909.5,717.5 M921.8,633.2 L921.4,643.1 L922.7,651.7 L922.1,661.3 L921.9,670.9 L921.2,682.1 L921.3,695 L921.8,705.4 L921.8,717.5 M934.2,634.9 L934.1,643.3 L933.6,652.2 L933.9,661.3 L933.7,670.7 L934.3,683.4 L934.6,694.1 L934,705.9 L934.2,717.5 M946.5,636.5 L945.7,644.7 L947.3,653.1 L946.5,662.7 L947.2,670.6 L946.1,682.2 L946.3,694.2 L947.3,706.5 L946.5,717.5 M958.9,638.1 L958,646.8 L959.6,654.6 L959,662 L958.7,671.9 L959.4,683.3 L959.7,693.8 L958.1,705.3 L958.9,717.5 M971.2,639.8 L972,648 L971.5,655.9 L971.1,663.4 L970.4,671.6 L970.7,683.5 L971.5,693.9 L970.5,705.5 L971.2,717.5 M983.6,641.4 L982.9,648.1 L983.6,656.4 L983.3,663.2 L983.7,670.2 L983.2,682.6 L984.4,694.6 L984.2,705.9 L983.6,717.5 M995.9,643.1 L996.7,650.5 L995.6,656.2 L995.9,664.4 L995.8,670.7 L996.2,683.5 L995.4,693.5 L995.6,705.8 L995.9,717.5 M1008.3,644.7 L1008.8,651.8 L1008.3,657.4 L1009.1,664.2 L1008.8,670.6 L1007.7,683.2 L1007.9,695.1 L1008.2,705.3 L1008.3,717.5 M1020.6,646.4 L1020.9,659.5 L1020,670.9 L1020.1,683.6 L1020,693.5 L1019.8,705.7 L1020.6,717.5 M1033,648 L1033.4,660.5 L1033.7,670.8 L1032.4,683.5 L1033.4,693.5 L1033.2,705.7 L1033,717.5 M1045.3,649.7 L1044.7,659.5 L1044.9,670.8 L1046.1,682 L1046.1,693.8 L1045,706.5 L1045.3,717.5 M1057.7,651.3 L1056.8,661.2 L1057.4,671.9 L1057.1,682.5 L1058.4,693.5 L1057.5,706.5 L1057.7,717.5 M1070,653 L1069.2,661.2 L1070.8,670.7 L1070.4,683.4 L1069.7,693.9 L1070.8,706.1 L1070,717.5 M1082.4,654.6 L1082,662.5 L1081.5,671.6 L1083.1,682.9 L1083.1,693.4 L1081.9,705.9 L1082.4,717.5 M1094.7,656.3 L1094.5,663.2 L1094.6,671.1 L1095.5,682.1 L1095.2,694.7 L1095.3,706.4 L1094.7,717.5 M1107.1,657.9 L1106.7,670.9 L1107.6,681.9 L1106.5,694.8 L1106.6,705.1 L1107.1,717.5 M1119.4,659.5 L1119.1,672 L1120.1,683.6 L1119,693.6 L1118.7,705.9 L1119.4,717.5 M1131.8,661.2 L1131.3,671 L1132,683 L1132.2,694.9 L1132,705.2 L1131.8,717.5 M1144.1,661.6 L1144.2,670.9 L1144.5,682.2 L1143.6,693.8 L1143.5,706.6 L1144.1,717.5 M1156.5,661.6 L1156.3,672 L1156.5,682.2 L1157,694.6 L1157.3,705.2 L1156.5,717.5 M1168.8,661.6 L1169.4,671.8 L1168,682.3 L1168.1,693.7 L1169.7,706 L1168.8,717.5 M1181.1,661.6 L1181.8,671 L1180.7,683.2 L1182,693.6 L1181.3,706.1 L1181.1,717.5 M1193.5,661.6 L1192.9,670.6 L1193.1,682.9 L1193.8,693.8 L1192.6,705.6 L1193.5,717.5 M1205.8,661.6 L1205.5,670.6 L1206.4,682.8 L1205.1,693.6 L1205.7,706 L1205.8,717.5 M1218.2,661.6 L1217.6,671.5 L1218,682.3 L1217.9,695.1 L1217.9,706 L1218.2,717.5 M1230.5,661.6 L1230.7,671.3 L1230.5,682.6 L1230.6,694.2 L1230.4,706.1 L1230.5,717.5 M1242.9,661.6 L1242.9,671.3 L1242.9,682.6 L1242.7,694.3 L1243,706.1 L1242.9,717.5 M1255.2,661.6 L1255.2,671.1 L1255.1,682.6 L1255.3,694.5 L1255.1,705.9 L1255.2,717.5 M1267.6,661.6 L1267.5,671 L1267.8,682.9 L1267.6,694.1 L1267.8,705.9 L1267.6,717.5 M1279.9,661.6 L1280.1,671 L1280.1,682.6 L1279.9,694.4 L1280.1,705.8 L1279.9,717.5 M1292.3,661.6 L1292.3,671.1 L1292.1,682.6 L1292.4,694.5 L1292.1,705.9 L1292.3,717.5 M1304.6,661.6 L1304.8,670.9 L1304.7,682.7 L1304.7,694.2 L1304.6,705.9 L1304.6,717.5 M1317,661.6 L1317,671.1 L1316.8,682.7 L1317,694.2 L1317.1,706 L1317,717.5 M1329.3,661.6 L1329.3,670.9 L1329.2,682.7 L1329.2,694.3 L1329.4,705.7 L1329.3,717.5 M1341.7,661.6 L1341.8,671.2 L1341.7,682.5 L1341.7,694.3 L1341.9,705.8 L1341.7,717.5 M1354,661.6 L1354.1,671.2 L1353.9,682.9 L1354,694.5 L1354.2,705.8 L1354,717.5 M1366.4,661.6 L1366.2,671 L1366.5,682.6 L1366.6,694.2 L1366.5,705.8 L1366.4,717.5 M1378.7,661.6 L1378.6,671 L1378.8,682.6 L1378.6,694.2 L1378.6,706.1 L1378.7,717.5 M1391.1,661.6 L1391,671.2 L1390.9,682.7 L1391.2,694.2 L1391.2,705.9 L1391.1,717.5 M1403.4,661.6 L1403.3,671.3 L1403.5,682.7 L1403.6,694.2 L1403.6,705.9 L1403.4,717.5 M1415.8,661.6 L1415.8,671 L1415.9,682.5 L1415.9,694.2 L1415.9,706.1 L1415.8,717.5 M1428.1,661.6 L1428.1,670.9 L1428,682.6 L1428.2,694.3 L1428.2,706.1 L1428.1,717.5 M464.8,636.2 L477.3,636.5 L489.6,636.1 L502,636.2 L514.3,636.3 L526.5,636.1 L538.9,636.5 L551.3,636.3 L563.6,636.1 L576,636.3 L588.5,636.4 L600.6,636.3 L612.9,636.2 L625.3,636.4 L637.7,636.3 L650,636.3 L662.3,636.4 L674.8,636.4 L687.2,636.5 L699.7,636.5 L711.9,636.3 L724.2,636.5 L736.4,636.4 L748.8,636.2 L761.4,636.3 L773.4,636.4 L786.1,636.3 L798.1,636.1 L810.5,636.4 L822.9,636.1 L835.6,635.5 L848,635.5 L860,635.8 L871.8,637.8 L884.1,638.7 L896.8,640.1 L909.7,642.2 L921.4,643.1 L934.1,643.3 L945.7,644.7 L958,646.8 L972,648 L982.9,648.1 L996.7,650.5 L1008.8,651.8 L1020.9,659.5 M464.9,647.7 L477.2,647.9 L489.4,647.8 L502.1,647.7 L514.4,648.1 L526.4,648 L539.1,647.8 L551.4,647.7 L563.5,647.8 L575.8,647.7 L588.3,647.8 L600.6,647.7 L613.1,648.1 L625.6,647.9 L637.6,647.7 L650,648.1 L662.3,647.9 L675,647.9 L687.3,647.8 L699.4,648.1 L711.7,647.8 L724.3,647.8 L736.4,648 L749,647.8 L761.2,648 L773.5,647.8 L785.8,648.1 L798.2,647.8 L810.8,648 L822.9,647.8 L835.8,647.5 L847.1,647.5 L860.8,647.5 L873.2,648.2 L884.4,650.3 L896.7,649.7 L910.2,651.4 L922.7,651.7 L933.6,652.2 L947.3,653.1 L959.6,654.6 L971.5,655.9 L983.6,656.4 L995.6,656.2 L1008.3,657.4 L1020.9,659.5 L1033.4,660.5 L1044.7,659.5 L1056.8,661.2 L1069.2,661.2 L1082,662.5 L1094.5,663.2 L1107.1,657.9 M464.9,659.4 L477.4,659.3 L489.6,659.5 L501.9,659.6 L514.2,659.6 L526.5,659.4 L538.8,659.4 L551.5,659.6 L563.5,659.4 L575.9,659.4 L588.2,659.6 L600.5,659.4 L613.2,659.5 L625.4,659.7 L637.9,659.6 L650,659.5 L662.5,659.5 L674.8,659.5 L687,659.5 L699.5,659.5 L711.9,659.5 L724.1,659.7 L736.5,659.4 L748.9,659.4 L761.2,659.5 L773.4,659.6 L785.9,659.4 L798.3,659.5 L810.7,659.6 L822.8,659.6 L834.6,659.1 L848.1,659.1 L860.9,660.4 L873,660 L883.9,660.8 L896.4,661.4 L909.8,660.4 L922.1,661.3 L933.9,661.3 L946.5,662.7 L959,662 L971.1,663.4 L983.3,663.2 L995.9,664.4 L1009.1,664.2 L1020.9,659.5 M464.7,671.1 L477.3,671 L489.5,671.1 L501.8,671.1 L514.1,671.2 L526.6,671.2 L538.8,671.1 L551.4,671.2 L563.5,671.2 L576.1,671 L588.4,671.2 L600.6,671.2 L613.1,671.2 L625.5,671 L637.8,671.3 L650.1,671.3 L662.4,671.1 L674.8,671.2 L687,671 L699.7,671.2 L711.7,671.3 L724.2,671.2 L736.6,671.3 L748.8,670.9 L761.3,671.3 L773.7,671.2 L785.8,671.1 L798.4,671.2 L810.5,671.1 L823,671.2 L835.8,670.6 L847.8,670.2 L859.2,671 L873.1,671.5 L885.4,670.4 L896.7,671.9 L909.9,671 L921.9,670.9 L933.7,670.7 L947.2,670.6 L958.7,671.9 L970.4,671.6 L983.7,670.2 L995.8,670.7 L1008.8,670.6 L1020,670.9 L1033.7,670.8 L1044.9,670.8 L1057.4,671.9 L1070.8,670.7 L1081.5,671.6 L1094.6,671.1 L1106.7,670.9 L1119.1,672 L1131.3,671 L1144.2,670.9 L1156.3,672 L1169.4,671.8 L1181.8,671 L1192.9,670.6 L1205.5,670.6 L1217.6,671.5 L1230.7,671.3 L1242.9,671.3 L1255.2,671.1 L1267.5,671 L1280.1,671 L1292.3,671.1 L1304.8,670.9 L1317,671.1 L1329.3,670.9 L1341.8,671.2 L1354.1,671.2 L1366.2,671 L1378.6,671 L1391,671.2 L1403.3,671.3 L1415.8,671 L1428.1,670.9 M464.7,682.7 L477.1,682.5 L489.5,682.6 L501.7,682.8 L514.3,682.9 L526.4,682.7 L539,682.6 L551.3,682.7 L563.7,682.6 L575.8,682.9 L588.3,682.6 L600.9,682.7 L612.9,682.8 L625.3,682.6 L637.7,682.8 L650.1,682.9 L662.5,682.8 L674.8,682.7 L687,682.8 L699.4,682.7 L712,682.9 L724,682.5 L736.5,682.6 L748.8,682.5 L761.2,682.8 L773.5,682.6 L785.9,682.7 L798.4,682.9 L810.7,682.8 L823.1,682.8 L835.8,683.6 L846.9,682.3 L860.6,683.5 L871.9,683.4 L885.5,683.1 L896.6,682.3 L909.9,683 L921.2,682.1 L934.3,683.4 L946.1,682.2 L959.4,683.3 L970.7,683.5 L983.2,682.6 L996.2,683.5 L1007.7,683.2 L1020.1,683.6 L1032.4,683.5 L1046.1,682 L1057.1,682.5 L1070.4,683.4 L1083.1,682.9 L1095.5,682.1 L1107.6,681.9 L1120.1,683.6 L1132,683 L1144.5,682.2 L1156.5,682.2 L1168,682.3 L1180.7,683.2 L1193.1,682.9 L1206.4,682.8 L1218,682.3 L1230.5,682.6 L1242.9,682.6 L1255.1,682.6 L1267.8,682.9 L1280.1,682.6 L1292.1,682.6 L1304.7,682.7 L1316.8,682.7 L1329.2,682.7 L1341.7,682.5 L1353.9,682.9 L1366.5,682.6 L1378.8,682.6 L1390.9,682.7 L1403.5,682.7 L1415.9,682.5 L1428,682.6 M464.7,694.1 L477.1,694.4 L489.7,694.4 L502,694.3 L514.4,694.2 L526.6,694.5 L538.8,694.3 L551.1,694.4 L563.6,694.2 L576,694.2 L588.5,694.5 L600.9,694.5 L613.2,694.4 L625.6,694.4 L637.9,694.2 L650.1,694.3 L662.3,694.3 L674.8,694.5 L687.3,694.5 L699.5,694.2 L711.7,694.2 L724.3,694.3 L736.6,694.2 L749,694.3 L761.3,694.4 L773.5,694.3 L785.8,694.3 L798.3,694.2 L810.8,694.4 L823,694.1 L835.3,694.1 L848,694.6 L860,693.9 L872.4,693.4 L885.5,693.9 L897.1,693.7 L909.1,693.5 L921.3,695 L934.6,694.1 L946.3,694.2 L959.7,693.8 L971.5,693.9 L984.4,694.6 L995.4,693.5 L1007.9,695.1 L1020,693.5 L1033.4,693.5 L1046.1,693.8 L1058.4,693.5 L1069.7,693.9 L1083.1,693.4 L1095.2,694.7 L1106.5,694.8 L1119,693.6 L1132.2,694.9 L1143.6,693.8 L1157,694.6 L1168.1,693.7 L1182,693.6 L1193.8,693.8 L1205.1,693.6 L1217.9,695.1 L1230.6,694.2 L1242.7,694.3 L1255.3,694.5 L1267.6,694.1 L1279.9,694.4 L1292.4,694.5 L1304.7,694.2 L1317,694.2 L1329.2,694.3 L1341.7,694.3 L1354,694.5 L1366.6,694.2 L1378.6,694.2 L1391.2,694.2 L1403.6,694.2 L1415.9,694.2 L1428.2,694.3 M464.8,706 L477.1,705.9 L489.4,705.9 L502.1,705.8 L514.2,706 L526.7,706 L538.9,705.9 L551.1,705.7 L563.6,705.7 L576,705.7 L588.5,706 L600.9,705.8 L613.2,705.9 L625.3,706 L637.7,705.8 L650.1,705.7 L662.3,705.8 L674.9,706.1 L687,706 L699.4,705.8 L711.7,706 L724,706.1 L736.4,705.8 L748.8,705.9 L761.2,705.8 L773.5,705.9 L785.8,705.8 L798.5,705.8 L810.7,706.1 L823.1,706 L835.3,706.2 L848,705.5 L859.5,706.7 L871.5,705.9 L884.5,705.7 L896.9,706.7 L910.2,705.2 L921.8,705.4 L934,705.9 L947.3,706.5 L958.1,705.3 L970.5,705.5 L984.2,705.9 L995.6,705.8 L1008.2,705.3 L1019.8,705.7 L1033.2,705.7 L1045,706.5 L1057.5,706.5 L1070.8,706.1 L1081.9,705.9 L1095.3,706.4 L1106.6,705.1 L1118.7,705.9 L1132,705.2 L1143.5,706.6 L1157.3,705.2 L1169.7,706 L1181.3,706.1 L1192.6,705.6 L1205.7,706 L1217.9,706 L1230.4,706.1 L1243,706.1 L1255.1,705.9 L1267.8,705.9 L1280.1,705.8 L1292.1,705.9 L1304.6,705.9 L1317.1,706 L1329.4,705.7 L1341.9,705.8 L1354.2,705.8 L1366.5,705.8 L1378.6,706.1 L1391.2,705.9 L1403.6,705.9 L1415.9,706.1 L1428.2,706.1" fill="none" stroke="#b6b6b6" stroke-width="1"/></g>
<g clip-path="url(#czone)"><path d="M553.4,544.4 L552.1,554.1 L555.1,566.2 L556.6,578.4 L559.1,591.6 L558.9,603.4 L561.6,613.1 L565.1,625.3 L563.2,636.4 L566.8,651.2 L568.9,661 L568.2,671.1 M565.6,544.4 L566.8,555.5 L568.6,567.6 L571.4,580.4 L569.9,592.8 L570.5,603 L573.6,613.6 L573.6,627.4 L574.9,638.2 L580.4,648.3 L578.7,661.8 L581.5,673.7 M578.7,544.4 L577.4,555.3 L579.4,566 L583.5,580.6 L584.2,589.2 L586.3,603.9 L586.1,615.6 L587.6,625.2 L587.6,636.9 L588.8,649 L593.4,662.2 L595.3,673.9 M588.6,544.4 L591.3,555.8 L593.9,567.9 L593.1,580.1 L597.6,590.1 L598.8,601 L597.5,613.5 L601.2,628.1 L602.7,637.3 L604.8,649 L603.5,663 L606.7,673.9 M602.6,544.4 L605.5,556 L606.4,568.6 L608,579.2 L608.9,591.5 L608.6,601.7 L611.4,612.9 L614.2,624.9 L611.8,636.4 L617.3,649.1 L615.3,659.5 L616.4,673.9 M614.8,544.4 L616.6,557 L615.3,568.2 L618.1,580.8 L621.6,592.8 L619.8,604.4 L625,616.4 L623,625.1 L624.5,636.1 L629.2,650.9 L629.8,662.7 L631.3,672.2 M624.7,544.4 L626.2,557.1 L628.2,567.1 L630.7,577.6 L631.4,590.3 L634.9,602.4 L634.7,616.5 L637,627.7 L639,636.1 L639.6,649.4 L642.7,660.8 L643.9,673.3 M637.6,544.4 L641.9,554.5 L643.2,566.5 L641.1,578.3 L646,593.1 L644.1,602.9 L647.8,615.8 L647.9,626.3 L650.1,639.3 L651.2,651.5 L652.8,660.3 L656.2,673.1 M649.4,544.4 L653.2,554.4 L655.4,568.6 L656.9,580 L656.5,590.8 L658.1,604.5 L658.3,616.2 L659.5,625.1 L662.1,639.6 L664.6,649.2 L667.8,660.3 L667.4,673.2 M664.5,544.4 L666,556.7 L665.7,567.1 L666.4,580.9 L670.1,592.2 L669.4,602.7 L673.6,614.9 L672.3,626.1 L677.1,637 L675.5,648.9 L679.3,662.8 L678.4,671.7 M674.6,544.4 L676.4,556.2 L677.2,567.1 L678.8,581.4 L682.7,589.6 L685.2,601.3 L684.2,616.5 L687.5,627.2 L687.4,636.8 L689.8,648.1 L689.4,661 L690.1,672.7 M689.3,544.4 L690.4,556.1 L691.6,567.7 L690.9,579.9 L693.6,592.2 L697.3,602.6 L697.3,615.6 L698.2,625.2 L701,639.5 L702.7,650.5 L704.6,662.1 L705.1,672.9 M699.5,544.4 L702.4,554.5 L702.9,568.9 L705.7,580 L705.2,590.9 L707.6,603.4 L708.9,615.3 L712.7,625 L713,639.1 L713.3,649.7 L717.4,659.6 L717,671.7 M713.8,544.4 L716,556.2 L713.8,568.1 L717.3,580.4 L718.7,591.8 L721.5,603 L721.2,616.4 L721.8,627 L724.1,639.1 L724.4,651.6 L727,659.6 L728.1,672.7 M722.8,544.4 L726,555.8 L728.8,567.2 L728.4,578.4 L732,593 L732.5,601.8 L735.2,614.2 L734.1,624.8 L738.1,639.2 L739,649.6 L740.2,660.3 L743.4,672.5 M737.8,544.4 L740.1,557.4 L740.1,567 L741.9,578 L744.7,590.6 L746.2,602 L745.7,613.6 L747.4,625 L747,638.9 L749.7,648.7 L751.3,661.3 L753.4,673.6 M750.2,544.4 L750.4,557.8 L754.1,566 L755.4,581.1 L756.7,589.8 L758.5,603.4 L756.4,612.6 L762,626.9 L760.4,636.4 L761.4,648.6 L765.7,660.8 L764.5,674.7 M763.1,544.4 L761.8,557.7 L765.3,568.9 L767,581.1 L769.1,592.6 L768,603.7 L770.9,615.6 L772,627.8 L774,637.1 L774.1,648.3 L776.8,659.6 L778.2,671.7 M774.1,544.4 L775.6,556.3 L778.7,565.8 L780.1,579.4 L780.4,591.9 L783.1,602.4 L782.7,616.4 L782.7,626.8 L786.7,636.1 L788.1,650.4 L791,660.7 L792.7,673.1 M786.3,544.4 L789.6,554.2 L790.4,568.3 L790.2,580.9 L791.8,591.1 L794,604 L794.1,614.3 L796.6,626.5 L799.8,637.2 L801.3,649.3 L801.4,660.5 L802.9,675 M799.4,544.4 L801.5,555.4 L800.9,567 L803.6,580 L806,589.4 L807.2,604.4 L807.9,612.8 L808.3,624.3 L809.3,639.7 L812.7,650.3 L815,663 L815.7,673.6 M811.6,544.4 L813.4,556.5 L814.8,566.7 L816.2,579.3 L818.2,589.6 L817.1,601 L821.2,616.3 L822.2,625.8 L824.4,639.1 L824.8,648.7 L825.1,661.1 L826.7,672.8 M823.9,544.4 L826.7,554.3 L826.6,566 L826.1,580.7 L829.6,592.9 L830.6,601 L831.8,615 L835.7,628.2 L835.2,637.6 L835,650.3 L837,660 L837.7,671.1 M836.4,544.4 L835.4,558 L836.8,569.3 L838.5,577.6 L842.6,590.2 L844.1,601.6 L842.6,615.7 L847,627.7 L848.6,636.3 L849.7,650.5 L850.4,663.1 L851,675 M848.9,544.4 L847.3,554.2 L851.6,569.1 L850.6,578.7 L854.9,589.9 L857,602.8 L855,614.1 L858.7,626.1 L860.7,636.6 L862.7,649.2 L863.5,661.9 L864,672.6 M861.5,544.4 L862.2,557.2 L860.5,567 L858.3,581.4 L861.1,592.5 L859.5,603.3 L862.3,615.9 L860.6,625.5 L859.9,639.6 L859.7,650.4 L860.6,663 L861.6,672.2 M870.3,544.4 L871.5,555.8 L872.9,569.1 L874.2,577.7 L874,592.4 L874.1,603.2 L871.5,616 L873.9,627 L874.3,637.4 L870.7,649.9 L873.8,660.2 L873.6,674.8 M883.6,544.4 L885.3,556.8 L884.6,566.6 L883.7,580.5 L886.1,591 L883,604.1 L886,613.5 L885.2,627.9 L886.5,638.1 L884.7,650.1 L883.4,660.2 L883.4,673.9 M896.5,544.4 L897.4,555.7 L897.2,566.4 L895.1,581.5 L896.5,589.6 L897.7,604 L895.6,615 L896.4,626.4 L895,636.1 L899.3,651.2 L897,661.7 L896.1,674.2 M909.1,544.4 L911.4,557.2 L910.8,569.7 L908.3,577.7 L908.1,589.9 L907.6,601.1 L909.7,616.1 L909.2,628.1 L911.2,636.3 L909.8,649.3 L907.7,663.2 L908.3,673.4 M922.3,544.4 L923.7,556.8 L921.2,567.6 L920.2,581.4 L923.9,590.1 L919.7,601.9 L921,616.2 L923.5,627.6 L919.7,639.1 L922.6,650.3 L923.8,659.6 L920.1,674.1 M935.9,544.4 L934.8,555.3 L934.4,568.8 L932.3,578.8 L932.9,589.7 L933.9,601.6 L932.8,613.2 L934.8,624.4 L935,636.8 L932,651.4 L932.8,663.1 L935.6,674.7 M944.7,544.4 L946.1,554.5 L948.2,569.2 L946.9,579.3 L945.6,592.5 L946.2,603.4 L944.7,613.5 L944.3,627.2 L946.5,636.6 L947.9,648.8 L945.9,660 L945.3,674.5 M957.9,544.4 L957.1,556.1 L957.8,569.4 L956.9,581.4 L956.7,592.8 L959.3,601.7 L958.5,613.7 L957.5,625.1 L958,640 L960.8,651.4 L956.8,660.6 L960.3,671.3 M971.9,544.4 L970,558 L968.8,569 L970.2,578.1 L968.7,592.5 L971,601.6 L970.6,616.2 L969.7,626.6 L969.3,636.7 L972.1,650.5 L969.6,659.7 L969.1,673.5 M983.2,544.4 L982.2,554.9 L983.7,568.6 L984.6,579.8 L981.9,589.5 L984.2,602.5 L984.2,612.8 L984.6,625.6 L984.7,639.5 L983.2,647.8 L985,661.3 L984.8,672.2 M994.1,544.4 L997,555.6 L994,567.3 L995.9,577.5 L995.6,591 L995.6,601.4 L996.4,615.9 L997.1,625.6 L996.4,637.5 L996.6,647.9 L997.1,663.2 L995.5,673.2 M1007.9,544.4 L1008,554.2 L1009.9,566.7 L1006.4,577.9 L1006.7,592.5 L1005.7,601.3 L1008.7,613.4 L1005.7,626.7 L1008.1,638.1 L1008.7,648.1 L1009.4,662.3 L1005.8,671.6 M1020.1,544.4 L1020.1,555.2 L1018.4,567.4 L1018.5,579.9 L1021.7,589.8 L1020.4,603.9 L1018.6,615.9 L1022,625.9 L1019.8,639.4 L1020.2,649.3 L1022,662.5 L1019.4,672.1 M1031.7,544.4 L1032.1,558 L1033.7,569.5 L1033.8,580.9 L1030.4,591.3 L1034.4,604.6 L1031.3,614.3 L1033,625.8 L1032.5,636.3 L1032.1,649.7 L1030.3,660 L1034.5,674.2 M1046.6,544.4 L1045.3,557.3 L1046.4,569.3 L1042.7,580.1 L1043.7,591.9 L1043.7,603.1 L1046.6,615.1 L1043.6,626.4 L1044.4,639.8 L1043.8,648.9 L1045.3,659.9 L1045.1,674.9 M1057.1,544.4 L1056,556 L1057.1,566.4 L1055.3,578 L1056.1,590.8 L1056.1,601.9 L1055.2,614.8 L1058.5,626.7 L1057.3,638.6 L1055.7,650.5 L1056.8,661.6 L1057.5,673 M1068.5,544.4 L1068.2,555 L1069.4,567.3 L1069.7,577.5 L1068.7,592.6 L1068.1,603.1 L1069.3,613.7 L1071.4,625.5 L1070.5,636.6 L1067.4,651.2 L1069,659.6 L1068.8,672.9 M1082.6,544.4 L1079.9,555 L1083.6,568.8 L1080.1,578.8 L1081,591.9 L1082.1,604.3 L1083,614.7 L1082.7,627.3 L1082.7,637.9 L1082.9,650.5 L1083.4,659.9 L1083.2,671.1 M1095.1,544.4 L1094.3,556.1 L1095.9,568.1 L1093.5,580.6 L1095.5,591.6 L1093.4,602.7 L1093.7,615.5 L1093,625.9 L1094.1,637.5 L1093.1,650.8 L1095.4,661.4 L1093.7,671.8 M1105.3,544.4 L1104.6,556.4 L1106.6,566.2 L1108,578.8 L1107.7,592.6 L1108.2,601.7 L1105.9,616.2 L1104,624.5 L1106.5,638 L1108,650.8 L1106.4,663.4 L1106.3,673.2 M1119.3,544.4 L1118,555.5 L1118.9,567.2 L1120.5,580.2 L1118.6,589.6 L1117.9,602.5 L1118.8,614.9 L1120.2,628.2 L1118.4,637.8 L1119,651.7 L1117.8,661.5 L1119.9,671.8 M1130,544.4 L1132.9,557.4 L1130.9,566.2 L1132.5,580.3 L1132.2,593.2 L1132.5,602.6 L1129.3,613.8 L1130.9,626.3 L1129.4,636.7 L1131.4,650.1 L1130.2,663.4 L1131.4,671.3 M1142.7,544.4 L1144.4,555.3 L1143.9,565.8 L1142.2,580.9 L1143.5,591.9 L1141.8,602.9 L1143.3,613.7 L1143.7,626.4 L1145.3,638.3 L1142.7,648.2 L1141.6,662.4 L1141.4,671.5 M1154,544.4 L1155.5,557.4 L1155.9,569 L1153.5,577.5 L1156.6,590.5 L1156.3,602.3 L1153.9,613.7 L1153.6,627.9 L1155.8,637.4 L1155.2,649.2 L1153.4,663 L1155.8,674.9 M1167.4,544.4 L1168.2,555.1 L1165.7,569.5 L1169.3,578.8 L1169.5,592.5 L1166.8,603.3 L1169.7,614.6 L1169.7,625.3 L1167.2,638.9 L1166.5,648.9 L1169.4,661.3 L1169,672.1 M1178.6,544.4 L1179.4,554.8 L1182.1,567 L1180.3,578 L1180.1,590.7 L1179.6,601.2 L1178.3,615.9 L1179.3,625.3 L1178.6,637.1 L1178.8,647.8 L1180.7,660.8 L1178.5,673.9 M1190.5,544.4 L1191.3,557.4 L1190.7,567.6 L1193.8,580.7 L1190.8,590.6 L1193.3,602.4 L1194.3,613.4 L1194.3,626.3 L1191.1,637.8 L1190.7,650.5 L1191.2,663 L1192.7,672.6 M1203.5,544.4 L1205.1,555 L1206.2,566.3 L1204.7,579.7 L1203.6,592.3 L1204.1,603.5 L1204.9,613.8 L1204.1,624.6 L1203.2,639.4 L1203.8,650.4 L1202.9,661.6 L1204,673.1 M1216,544.4 L1215,555.3 L1215.7,566.3 L1217.9,578.6 L1216.5,592.8 L1218.1,604.4 L1218.5,613.1 L1215.9,624.4 L1217.7,638.7 L1216.2,649.4 L1217.6,662.2 L1215.8,674.5 M1228.5,544.4 L1229.8,554.8 L1227.5,569.5 L1230.2,580.4 L1227.2,589.4 L1227.7,601.7 L1228.3,614.1 L1227.2,625.5 L1229.8,636.7 L1230.7,650 L1230.2,660.4 L1228.9,673.8 M1240.8,544.4 L1239.3,557.4 L1242.7,566.9 L1239.5,580.9 L1242,589.4 L1240.4,601.3 L1242.8,613.4 L1243.3,627.3 L1239.7,638.8 L1241,650.7 L1242.9,660.5 L1239.7,674.9 M1253.5,544.4 L1255.7,556.9 L1254.8,569.1 L1254.4,579.3 L1251.8,592 L1253.5,602.9 L1255.7,613.1 L1255,624.5 L1254.7,639.2 L1252.7,649.9 L1255.9,662 L1254,672.1 M1264.2,544.4 L1265.5,555.7 L1264.8,567 L1264.5,580.3 L1266.8,590.2 L1265,603 L1265.9,616.3 L1265.4,625.5 L1267.8,636.6 L1266.4,649 L1267.5,661.6 L1267.2,671.8 M1279.1,544.4 L1278.8,555.9 L1279.6,569.1 L1276.7,578.7 L1277.8,590 L1276.5,602 L1277.1,615.4 L1278.2,624.8 L1277.6,637.9 L1277.8,648.4 L1276.5,659.4 L1280.6,674.1 M1288.9,544.4 L1291.7,558 L1291,566.2 L1290.7,579.2 L1289.3,591.4 L1288.5,604.6 L1291.3,615.1 L1292.6,626.9 L1289.6,637 L1289.1,647.8 L1291.9,662.8 L1289.8,671.8 M1303.6,544.4 L1304.5,557.8 L1301.5,568.9 L1304.5,580.5 L1302.2,589.9 L1304.4,602.2 L1302.4,614.8 L1302.4,627.6 L1301.9,636.2 L1303.3,650.2 L1304.4,662.2 L1304.8,674.9 M1315.3,544.4 L1315.3,554.7 L1314.4,568.1 L1313.5,580.3 L1313.8,591 L1317.4,601.3 L1313.3,614.4 L1313.9,627.2 L1313.1,639.4 L1316.9,650.8 L1315,660.5 L1316,673.2 M1327.3,544.4 L1326.9,555.9 L1328.3,569.1 L1329.4,578.2 L1326.7,591 L1327.9,602.3 L1326.3,612.9 L1326.8,626.1 L1329.7,639.6 L1329.2,651.6 L1329.6,661.9 L1329,671.3 M1340.7,544.4 L1340.4,555.3 L1340.2,569.6 L1339.8,580.1 L1339,590.6 L1341.6,601 L1338.5,615.3 L1339.7,624.6 L1340.6,637.5 L1340.3,649.4 L1340,661.7 L1339.4,671.6 M1350.8,544.4 L1353.9,556.3 L1350.5,569.2 L1351.1,577.9 L1352.3,590.2 L1352.2,603.1 L1351,614.9 L1350.5,626.4 L1352.6,636.3 L1351.8,648 L1351.9,662.9 L1352.4,674 M1365.6,544.4 L1362.8,558.1 L1365.5,566.2 L1366,579.1 L1363.1,593 L1364.8,604 L1362.9,615.7 L1362.6,625.2 L1363.9,636.1 L1364.9,648.6 L1363.6,662.2 L1364.2,674.7 M1377.3,544.4 L1378.4,556.4 L1378.6,569.3 L1375.3,580.5 L1376.1,592.3 L1377.6,604.2 L1375.1,614.1 L1377.8,628.1 L1377.8,636.2 L1377.3,648.1 L1377,662.6 L1375.1,674.8 M1389.9,544.4 L1388,554.9 L1388.9,569.2 L1389.5,578 L1387,589.6 L1390.4,601.6 L1389.3,613.8 L1389.9,625.8 L1387.5,639.5 L1389.3,650.5 L1390.5,663.2 L1387,672.5 M1399.9,544.4 L1401.4,557.6 L1402.7,565.9 L1400,580.8 L1402.2,590.8 L1401.3,601.5 L1402.9,614.2 L1403,626.7 L1399.5,637.3 L1400.2,651.3 L1401.8,659.6 L1399.9,672.5 M1413.6,544.4 L1414,555.7 L1413.1,565.8 L1414,578.8 L1411.6,591 L1415.8,601.1 L1412.1,615.3 L1412.7,625.4 L1413.7,637 L1414,649.8 L1415.7,663.4 L1411.7,673.3 M1427.2,544.4 L1427.6,557.2 L1426.6,568.3 L1425.4,578.6 L1427.3,592.7 L1427.9,603.6 L1425.1,615.7 L1427.1,626.3 L1426.6,637.4 L1426.2,649.3 L1424.1,660.7 L1425.2,675.1 M1438.2,544.4 L1437.7,555.1 L1437.1,567.2 L1436.7,577.5 L1439.9,591 L1438.1,603.2 L1437.4,613.3 L1436.4,625.5 L1437.5,638.9 L1438.5,651.4 L1437.6,663.1 L1438.7,671.4 M552.1,554.1 L566.8,555.5 L577.4,555.3 L591.3,555.8 L605.5,556 L616.6,557 L626.2,557.1 L641.9,554.5 L653.2,554.4 L666,556.7 L676.4,556.2 L690.4,556.1 L702.4,554.5 L716,556.2 L726,555.8 L740.1,557.4 L750.4,557.8 L761.8,557.7 L775.6,556.3 L789.6,554.2 L801.5,555.4 L813.4,556.5 L826.7,554.3 L835.4,558 L847.3,554.2 L862.2,557.2 L871.5,555.8 L885.3,556.8 L897.4,555.7 L911.4,557.2 L923.7,556.8 L934.8,555.3 L946.1,554.5 L957.1,556.1 L970,558 L982.2,554.9 L997,555.6 L1008,554.2 L1020.1,555.2 L1032.1,558 L1045.3,557.3 L1056,556 L1068.2,555 L1079.9,555 L1094.3,556.1 L1104.6,556.4 L1118,555.5 L1132.9,557.4 L1144.4,555.3 L1155.5,557.4 L1168.2,555.1 L1179.4,554.8 L1191.3,557.4 L1205.1,555 L1215,555.3 L1229.8,554.8 L1239.3,557.4 L1255.7,556.9 L1265.5,555.7 L1278.8,555.9 L1291.7,558 L1304.5,557.8 L1315.3,554.7 L1326.9,555.9 L1340.4,555.3 L1353.9,556.3 L1362.8,558.1 L1378.4,556.4 L1388,554.9 L1401.4,557.6 L1414,555.7 L1427.6,557.2 L1437.7,555.1 M555.1,566.2 L568.6,567.6 L579.4,566 L593.9,567.9 L606.4,568.6 L615.3,568.2 L628.2,567.1 L643.2,566.5 L655.4,568.6 L665.7,567.1 L677.2,567.1 L691.6,567.7 L702.9,568.9 L713.8,568.1 L728.8,567.2 L740.1,567 L754.1,566 L765.3,568.9 L778.7,565.8 L790.4,568.3 L800.9,567 L814.8,566.7 L826.6,566 L836.8,569.3 L851.6,569.1 L860.5,567 L872.9,569.1 L884.6,566.6 L897.2,566.4 L910.8,569.7 L921.2,567.6 L934.4,568.8 L948.2,569.2 L957.8,569.4 L968.8,569 L983.7,568.6 L994,567.3 L1009.9,566.7 L1018.4,567.4 L1033.7,569.5 L1046.4,569.3 L1057.1,566.4 L1069.4,567.3 L1083.6,568.8 L1095.9,568.1 L1106.6,566.2 L1118.9,567.2 L1130.9,566.2 L1143.9,565.8 L1155.9,569 L1165.7,569.5 L1182.1,567 L1190.7,567.6 L1206.2,566.3 L1215.7,566.3 L1227.5,569.5 L1242.7,566.9 L1254.8,569.1 L1264.8,567 L1279.6,569.1 L1291,566.2 L1301.5,568.9 L1314.4,568.1 L1328.3,569.1 L1340.2,569.6 L1350.5,569.2 L1365.5,566.2 L1378.6,569.3 L1388.9,569.2 L1402.7,565.9 L1413.1,565.8 L1426.6,568.3 L1437.1,567.2 M556.6,578.4 L571.4,580.4 L583.5,580.6 L593.1,580.1 L608,579.2 L618.1,580.8 L630.7,577.6 L641.1,578.3 L656.9,580 L666.4,580.9 L678.8,581.4 L690.9,579.9 L705.7,580 L717.3,580.4 L728.4,578.4 L741.9,578 L755.4,581.1 L767,581.1 L780.1,579.4 L790.2,580.9 L803.6,580 L816.2,579.3 L826.1,580.7 L838.5,577.6 L850.6,578.7 L858.3,581.4 L874.2,577.7 L883.7,580.5 L895.1,581.5 L908.3,577.7 L920.2,581.4 L932.3,578.8 L946.9,579.3 L956.9,581.4 L970.2,578.1 L984.6,579.8 L995.9,577.5 L1006.4,577.9 L1018.5,579.9 L1033.8,580.9 L1042.7,580.1 L1055.3,578 L1069.7,577.5 L1080.1,578.8 L1093.5,580.6 L1108,578.8 L1120.5,580.2 L1132.5,580.3 L1142.2,580.9 L1153.5,577.5 L1169.3,578.8 L1180.3,578 L1193.8,580.7 L1204.7,579.7 L1217.9,578.6 L1230.2,580.4 L1239.5,580.9 L1254.4,579.3 L1264.5,580.3 L1276.7,578.7 L1290.7,579.2 L1304.5,580.5 L1313.5,580.3 L1329.4,578.2 L1339.8,580.1 L1351.1,577.9 L1366,579.1 L1375.3,580.5 L1389.5,578 L1400,580.8 L1414,578.8 L1425.4,578.6 L1436.7,577.5 M559.1,591.6 L569.9,592.8 L584.2,589.2 L597.6,590.1 L608.9,591.5 L621.6,592.8 L631.4,590.3 L646,593.1 L656.5,590.8 L670.1,592.2 L682.7,589.6 L693.6,592.2 L705.2,590.9 L718.7,591.8 L732,593 L744.7,590.6 L756.7,589.8 L769.1,592.6 L780.4,591.9 L791.8,591.1 L806,589.4 L818.2,589.6 L829.6,592.9 L842.6,590.2 L854.9,589.9 L861.1,592.5 L874,592.4 L886.1,591 L896.5,589.6 L908.1,589.9 L923.9,590.1 L932.9,589.7 L945.6,592.5 L956.7,592.8 L968.7,592.5 L981.9,589.5 L995.6,591 L1006.7,592.5 L1021.7,589.8 L1030.4,591.3 L1043.7,591.9 L1056.1,590.8 L1068.7,592.6 L1081,591.9 L1095.5,591.6 L1107.7,592.6 L1118.6,589.6 L1132.2,593.2 L1143.5,591.9 L1156.6,590.5 L1169.5,592.5 L1180.1,590.7 L1190.8,590.6 L1203.6,592.3 L1216.5,592.8 L1227.2,589.4 L1242,589.4 L1251.8,592 L1266.8,590.2 L1277.8,590 L1289.3,591.4 L1302.2,589.9 L1313.8,591 L1326.7,591 L1339,590.6 L1352.3,590.2 L1363.1,593 L1376.1,592.3 L1387,589.6 L1402.2,590.8 L1411.6,591 L1427.3,592.7 L1439.9,591 M558.9,603.4 L570.5,603 L586.3,603.9 L598.8,601 L608.6,601.7 L619.8,604.4 L634.9,602.4 L644.1,602.9 L658.1,604.5 L669.4,602.7 L685.2,601.3 L697.3,602.6 L707.6,603.4 L721.5,603 L732.5,601.8 L746.2,602 L758.5,603.4 L768,603.7 L783.1,602.4 L794,604 L807.2,604.4 L817.1,601 L830.6,601 L844.1,601.6 L857,602.8 L859.5,603.3 L874.1,603.2 L883,604.1 L897.7,604 L907.6,601.1 L919.7,601.9 L933.9,601.6 L946.2,603.4 L959.3,601.7 L971,601.6 L984.2,602.5 L995.6,601.4 L1005.7,601.3 L1020.4,603.9 L1034.4,604.6 L1043.7,603.1 L1056.1,601.9 L1068.1,603.1 L1082.1,604.3 L1093.4,602.7 L1108.2,601.7 L1117.9,602.5 L1132.5,602.6 L1141.8,602.9 L1156.3,602.3 L1166.8,603.3 L1179.6,601.2 L1193.3,602.4 L1204.1,603.5 L1218.1,604.4 L1227.7,601.7 L1240.4,601.3 L1253.5,602.9 L1265,603 L1276.5,602 L1288.5,604.6 L1304.4,602.2 L1317.4,601.3 L1327.9,602.3 L1341.6,601 L1352.2,603.1 L1364.8,604 L1377.6,604.2 L1390.4,601.6 L1401.3,601.5 L1415.8,601.1 L1427.9,603.6 L1438.1,603.2 M561.6,613.1 L573.6,613.6 L586.1,615.6 L597.5,613.5 L611.4,612.9 L625,616.4 L634.7,616.5 L647.8,615.8 L658.3,616.2 L673.6,614.9 L684.2,616.5 L697.3,615.6 L708.9,615.3 L721.2,616.4 L735.2,614.2 L745.7,613.6 L756.4,612.6 L770.9,615.6 L782.7,616.4 L794.1,614.3 L807.9,612.8 L821.2,616.3 L831.8,615 L842.6,615.7 L855,614.1 L862.3,615.9 L871.5,616 L886,613.5 L895.6,615 L909.7,616.1 L921,616.2 L932.8,613.2 L944.7,613.5 L958.5,613.7 L970.6,616.2 L984.2,612.8 L996.4,615.9 L1008.7,613.4 L1018.6,615.9 L1031.3,614.3 L1046.6,615.1 L1055.2,614.8 L1069.3,613.7 L1083,614.7 L1093.7,615.5 L1105.9,616.2 L1118.8,614.9 L1129.3,613.8 L1143.3,613.7 L1153.9,613.7 L1169.7,614.6 L1178.3,615.9 L1194.3,613.4 L1204.9,613.8 L1218.5,613.1 L1228.3,614.1 L1242.8,613.4 L1255.7,613.1 L1265.9,616.3 L1277.1,615.4 L1291.3,615.1 L1302.4,614.8 L1313.3,614.4 L1326.3,612.9 L1338.5,615.3 L1351,614.9 L1362.9,615.7 L1375.1,614.1 L1389.3,613.8 L1402.9,614.2 L1412.1,615.3 L1425.1,615.7 L1437.4,613.3 M565.1,625.3 L573.6,627.4 L587.6,625.2 L601.2,628.1 L614.2,624.9 L623,625.1 L637,627.7 L647.9,626.3 L659.5,625.1 L672.3,626.1 L687.5,627.2 L698.2,625.2 L712.7,625 L721.8,627 L734.1,624.8 L747.4,625 L762,626.9 L772,627.8 L782.7,626.8 L796.6,626.5 L808.3,624.3 L822.2,625.8 L835.7,628.2 L847,627.7 L858.7,626.1 L860.6,625.5 L873.9,627 L885.2,627.9 L896.4,626.4 L909.2,628.1 L923.5,627.6 L934.8,624.4 L944.3,627.2 L957.5,625.1 L969.7,626.6 L984.6,625.6 L997.1,625.6 L1005.7,626.7 L1022,625.9 L1033,625.8 L1043.6,626.4 L1058.5,626.7 L1071.4,625.5 L1082.7,627.3 L1093,625.9 L1104,624.5 L1120.2,628.2 L1130.9,626.3 L1143.7,626.4 L1153.6,627.9 L1169.7,625.3 L1179.3,625.3 L1194.3,626.3 L1204.1,624.6 L1215.9,624.4 L1227.2,625.5 L1243.3,627.3 L1255,624.5 L1265.4,625.5 L1278.2,624.8 L1292.6,626.9 L1302.4,627.6 L1313.9,627.2 L1326.8,626.1 L1339.7,624.6 L1350.5,626.4 L1362.6,625.2 L1377.8,628.1 L1389.9,625.8 L1403,626.7 L1412.7,625.4 L1427.1,626.3 L1436.4,625.5 M563.2,636.4 L574.9,638.2 L587.6,636.9 L602.7,637.3 L611.8,636.4 L624.5,636.1 L639,636.1 L650.1,639.3 L662.1,639.6 L677.1,637 L687.4,636.8 L701,639.5 L713,639.1 L724.1,639.1 L738.1,639.2 L747,638.9 L760.4,636.4 L774,637.1 L786.7,636.1 L799.8,637.2 L809.3,639.7 L824.4,639.1 L835.2,637.6 L848.6,636.3 L860.7,636.6 L859.9,639.6 L874.3,637.4 L886.5,638.1 L895,636.1 L911.2,636.3 L919.7,639.1 L935,636.8 L946.5,636.6 L958,640 L969.3,636.7 L984.7,639.5 L996.4,637.5 L1008.1,638.1 L1019.8,639.4 L1032.5,636.3 L1044.4,639.8 L1057.3,638.6 L1070.5,636.6 L1082.7,637.9 L1094.1,637.5 L1106.5,638 L1118.4,637.8 L1129.4,636.7 L1145.3,638.3 L1155.8,637.4 L1167.2,638.9 L1178.6,637.1 L1191.1,637.8 L1203.2,639.4 L1217.7,638.7 L1229.8,636.7 L1239.7,638.8 L1254.7,639.2 L1267.8,636.6 L1277.6,637.9 L1289.6,637 L1301.9,636.2 L1313.1,639.4 L1329.7,639.6 L1340.6,637.5 L1352.6,636.3 L1363.9,636.1 L1377.8,636.2 L1387.5,639.5 L1399.5,637.3 L1413.7,637 L1426.6,637.4 L1437.5,638.9 M566.8,651.2 L580.4,648.3 L588.8,649 L604.8,649 L617.3,649.1 L629.2,650.9 L639.6,649.4 L651.2,651.5 L664.6,649.2 L675.5,648.9 L689.8,648.1 L702.7,650.5 L713.3,649.7 L724.4,651.6 L739,649.6 L749.7,648.7 L761.4,648.6 L774.1,648.3 L788.1,650.4 L801.3,649.3 L812.7,650.3 L824.8,648.7 L835,650.3 L849.7,650.5 L862.7,649.2 L859.7,650.4 L870.7,649.9 L884.7,650.1 L899.3,651.2 L909.8,649.3 L922.6,650.3 L932,651.4 L947.9,648.8 L960.8,651.4 L972.1,650.5 L983.2,647.8 L996.6,647.9 L1008.7,648.1 L1020.2,649.3 L1032.1,649.7 L1043.8,648.9 L1055.7,650.5 L1067.4,651.2 L1082.9,650.5 L1093.1,650.8 L1108,650.8 L1119,651.7 L1131.4,650.1 L1142.7,648.2 L1155.2,649.2 L1166.5,648.9 L1178.8,647.8 L1190.7,650.5 L1203.8,650.4 L1216.2,649.4 L1230.7,650 L1241,650.7 L1252.7,649.9 L1266.4,649 L1277.8,648.4 L1289.1,647.8 L1303.3,650.2 L1316.9,650.8 L1329.2,651.6 L1340.3,649.4 L1351.8,648 L1364.9,648.6 L1377.3,648.1 L1389.3,650.5 L1400.2,651.3 L1414,649.8 L1426.2,649.3 L1438.5,651.4 M568.9,661 L578.7,661.8 L593.4,662.2 L603.5,663 L615.3,659.5 L629.8,662.7 L642.7,660.8 L652.8,660.3 L667.8,660.3 L679.3,662.8 L689.4,661 L704.6,662.1 L717.4,659.6 L727,659.6 L740.2,660.3 L751.3,661.3 L765.7,660.8 L776.8,659.6 L791,660.7 L801.4,660.5 L815,663 L825.1,661.1 L837,660 L850.4,663.1 L863.5,661.9 L860.6,663 L873.8,660.2 L883.4,660.2 L897,661.7 L907.7,663.2 L923.8,659.6 L932.8,663.1 L945.9,660 L956.8,660.6 L969.6,659.7 L985,661.3 L997.1,663.2 L1009.4,662.3 L1022,662.5 L1030.3,660 L1045.3,659.9 L1056.8,661.6 L1069,659.6 L1083.4,659.9 L1095.4,661.4 L1106.4,663.4 L1117.8,661.5 L1130.2,663.4 L1141.6,662.4 L1153.4,663 L1169.4,661.3 L1180.7,660.8 L1191.2,663 L1202.9,661.6 L1217.6,662.2 L1230.2,660.4 L1242.9,660.5 L1255.9,662 L1267.5,661.6 L1276.5,659.4 L1291.9,662.8 L1304.4,662.2 L1315,660.5 L1329.6,661.9 L1340,661.7 L1351.9,662.9 L1363.6,662.2 L1377,662.6 L1390.5,663.2 L1401.8,659.6 L1415.7,663.4 L1424.1,660.7 L1437.6,663.1 M568.2,671.1 L581.5,673.7 L595.3,673.9 L606.7,673.9 L616.4,673.9 L631.3,672.2 L643.9,673.3 L656.2,673.1 L667.4,673.2 L678.4,671.7 L690.1,672.7 L705.1,672.9 L717,671.7 L728.1,672.7 L743.4,672.5 L753.4,673.6 L764.5,674.7 L778.2,671.7 L792.7,673.1 L802.9,675 L815.7,673.6 L826.7,672.8 L837.7,671.1 L851,675 L864,672.6 L861.6,672.2 L873.6,674.8 L883.4,673.9 L896.1,674.2 L908.3,673.4 L920.1,674.1 L935.6,674.7 L945.3,674.5 L960.3,671.3 L969.1,673.5 L984.8,672.2 L995.5,673.2 L1005.8,671.6 L1019.4,672.1 L1034.5,674.2 L1045.1,674.9 L1057.5,673 L1068.8,672.9 L1083.2,671.1 L1093.7,671.8 L1106.3,673.2 L1119.9,671.8 L1131.4,671.3 L1141.4,671.5 L1155.8,674.9 L1169,672.1 L1178.5,673.9 L1192.7,672.6 L1204,673.1 L1215.8,674.5 L1228.9,673.8 L1239.7,674.9 L1254,672.1 L1267.2,671.8 L1280.6,674.1 L1289.8,671.8 L1304.8,674.9 L1316,673.2 L1329,671.3 L1339.4,671.6 L1352.4,674 L1364.2,674.7 L1375.1,674.8 L1387,672.5 L1399.9,672.5 L1411.7,673.3 L1425.2,675.1 L1438.7,671.4" fill="none" stroke="#b8b8b8" stroke-width="1"/>
<path d="M561.6,613.1h0 M565.1,625.3h0 M563.2,636.4h0 M566.8,651.2h0 M568.9,661h0 M568.2,671.1h0 M565.6,544.4h0 M566.8,555.5h0 M568.6,567.6h0 M571.4,580.4h0 M569.9,592.8h0 M570.5,603h0 M573.6,613.6h0 M573.6,627.4h0 M574.9,638.2h0 M580.4,648.3h0 M578.7,661.8h0 M581.5,673.7h0 M578.7,544.4h0 M577.4,555.3h0 M579.4,566h0 M583.5,580.6h0 M584.2,589.2h0 M586.3,603.9h0 M586.1,615.6h0 M587.6,625.2h0 M587.6,636.9h0 M588.8,649h0 M593.4,662.2h0 M595.3,673.9h0 M588.6,544.4h0 M591.3,555.8h0 M593.9,567.9h0 M593.1,580.1h0 M597.6,590.1h0 M598.8,601h0 M597.5,613.5h0 M601.2,628.1h0 M602.7,637.3h0 M604.8,649h0 M603.5,663h0 M606.7,673.9h0 M602.6,544.4h0 M605.5,556h0 M606.4,568.6h0 M608,579.2h0 M608.9,591.5h0 M608.6,601.7h0 M611.4,612.9h0 M614.2,624.9h0 M611.8,636.4h0 M617.3,649.1h0 M615.3,659.5h0 M616.4,673.9h0 M614.8,544.4h0 M616.6,557h0 M615.3,568.2h0 M618.1,580.8h0 M621.6,592.8h0 M619.8,604.4h0 M625,616.4h0 M623,625.1h0 M624.5,636.1h0 M629.2,650.9h0 M629.8,662.7h0 M631.3,672.2h0 M624.7,544.4h0 M626.2,557.1h0 M628.2,567.1h0 M630.7,577.6h0 M631.4,590.3h0 M634.9,602.4h0 M634.7,616.5h0 M637,627.7h0 M639,636.1h0 M639.6,649.4h0 M642.7,660.8h0 M643.9,673.3h0 M637.6,544.4h0 M641.9,554.5h0 M643.2,566.5h0 M641.1,578.3h0 M646,593.1h0 M644.1,602.9h0 M647.8,615.8h0 M647.9,626.3h0 M650.1,639.3h0 M651.2,651.5h0 M652.8,660.3h0 M656.2,673.1h0 M649.4,544.4h0 M653.2,554.4h0 M655.4,568.6h0 M656.9,580h0 M656.5,590.8h0 M658.1,604.5h0 M658.3,616.2h0 M659.5,625.1h0 M662.1,639.6h0 M664.6,649.2h0 M667.8,660.3h0 M667.4,673.2h0 M664.5,544.4h0 M666,556.7h0 M665.7,567.1h0 M666.4,580.9h0 M670.1,592.2h0 M669.4,602.7h0 M673.6,614.9h0 M672.3,626.1h0 M677.1,637h0 M675.5,648.9h0 M679.3,662.8h0 M678.4,671.7h0 M674.6,544.4h0 M676.4,556.2h0 M677.2,567.1h0 M678.8,581.4h0 M682.7,589.6h0 M685.2,601.3h0 M684.2,616.5h0 M687.5,627.2h0 M687.4,636.8h0 M689.8,648.1h0 M689.4,661h0 M690.1,672.7h0 M689.3,544.4h0 M690.4,556.1h0 M691.6,567.7h0 M690.9,579.9h0 M693.6,592.2h0 M697.3,602.6h0 M697.3,615.6h0 M698.2,625.2h0 M701,639.5h0 M702.7,650.5h0 M704.6,662.1h0 M705.1,672.9h0 M699.5,544.4h0 M702.4,554.5h0 M702.9,568.9h0 M705.7,580h0 M705.2,590.9h0 M707.6,603.4h0 M708.9,615.3h0 M712.7,625h0 M713,639.1h0 M713.3,649.7h0 M717.4,659.6h0 M717,671.7h0 M713.8,544.4h0 M716,556.2h0 M713.8,568.1h0 M717.3,580.4h0 M718.7,591.8h0 M721.5,603h0 M721.2,616.4h0 M721.8,627h0 M724.1,639.1h0 M724.4,651.6h0 M727,659.6h0 M728.1,672.7h0 M722.8,544.4h0 M726,555.8h0 M728.8,567.2h0 M728.4,578.4h0 M732,593h0 M732.5,601.8h0 M735.2,614.2h0 M734.1,624.8h0 M738.1,639.2h0 M739,649.6h0 M740.2,660.3h0 M743.4,672.5h0 M737.8,544.4h0 M740.1,557.4h0 M740.1,567h0 M741.9,578h0 M744.7,590.6h0 M746.2,602h0 M745.7,613.6h0 M747.4,625h0 M747,638.9h0 M749.7,648.7h0 M751.3,661.3h0 M753.4,673.6h0 M750.2,544.4h0 M750.4,557.8h0 M754.1,566h0 M755.4,581.1h0 M756.7,589.8h0 M758.5,603.4h0 M756.4,612.6h0 M762,626.9h0 M760.4,636.4h0 M761.4,648.6h0 M765.7,660.8h0 M764.5,674.7h0 M763.1,544.4h0 M761.8,557.7h0 M765.3,568.9h0 M767,581.1h0 M769.1,592.6h0 M768,603.7h0 M770.9,615.6h0 M772,627.8h0 M774,637.1h0 M774.1,648.3h0 M776.8,659.6h0 M778.2,671.7h0 M774.1,544.4h0 M775.6,556.3h0 M778.7,565.8h0 M780.1,579.4h0 M780.4,591.9h0 M783.1,602.4h0 M782.7,616.4h0 M782.7,626.8h0 M786.7,636.1h0 M788.1,650.4h0 M791,660.7h0 M792.7,673.1h0 M786.3,544.4h0 M789.6,554.2h0 M790.4,568.3h0 M790.2,580.9h0 M791.8,591.1h0 M794,604h0 M794.1,614.3h0 M796.6,626.5h0 M799.8,637.2h0 M801.3,649.3h0 M801.4,660.5h0 M802.9,675h0 M799.4,544.4h0 M801.5,555.4h0 M800.9,567h0 M803.6,580h0 M806,589.4h0 M807.2,604.4h0 M807.9,612.8h0 M808.3,624.3h0 M809.3,639.7h0 M812.7,650.3h0 M815,663h0 M815.7,673.6h0 M811.6,544.4h0 M813.4,556.5h0 M814.8,566.7h0 M816.2,579.3h0 M818.2,589.6h0 M817.1,601h0 M821.2,616.3h0 M822.2,625.8h0 M824.4,639.1h0 M824.8,648.7h0 M825.1,661.1h0 M826.7,672.8h0 M823.9,544.4h0 M826.7,554.3h0 M826.6,566h0 M826.1,580.7h0 M829.6,592.9h0 M830.6,601h0 M831.8,615h0 M835.7,628.2h0 M835.2,637.6h0 M835,650.3h0 M837,660h0 M837.7,671.1h0 M836.4,544.4h0 M835.4,558h0 M836.8,569.3h0 M838.5,577.6h0 M842.6,590.2h0 M844.1,601.6h0 M842.6,615.7h0 M847,627.7h0 M848.6,636.3h0 M849.7,650.5h0 M850.4,663.1h0 M851,675h0 M848.9,544.4h0 M847.3,554.2h0 M851.6,569.1h0 M850.6,578.7h0 M854.9,589.9h0 M857,602.8h0 M855,614.1h0 M858.7,626.1h0 M860.7,636.6h0 M862.7,649.2h0 M863.5,661.9h0 M864,672.6h0 M861.5,544.4h0 M862.2,557.2h0 M860.5,567h0 M858.3,581.4h0 M861.1,592.5h0 M859.5,603.3h0 M862.3,615.9h0 M860.6,625.5h0 M859.9,639.6h0 M859.7,650.4h0 M860.6,663h0 M861.6,672.2h0 M870.3,544.4h0 M871.5,555.8h0 M872.9,569.1h0 M874.2,577.7h0 M874,592.4h0 M874.1,603.2h0 M871.5,616h0 M873.9,627h0 M874.3,637.4h0 M870.7,649.9h0 M873.8,660.2h0 M873.6,674.8h0 M883.6,544.4h0 M885.3,556.8h0 M884.6,566.6h0 M883.7,580.5h0 M886.1,591h0 M883,604.1h0 M886,613.5h0 M885.2,627.9h0 M886.5,638.1h0 M884.7,650.1h0 M883.4,660.2h0 M883.4,673.9h0 M896.5,544.4h0 M897.4,555.7h0 M897.2,566.4h0 M895.1,581.5h0 M896.5,589.6h0 M897.7,604h0 M895.6,615h0 M896.4,626.4h0 M895,636.1h0 M899.3,651.2h0 M897,661.7h0 M896.1,674.2h0 M909.1,544.4h0 M911.4,557.2h0 M910.8,569.7h0 M908.3,577.7h0 M908.1,589.9h0 M907.6,601.1h0 M909.7,616.1h0 M909.2,628.1h0 M911.2,636.3h0 M909.8,649.3h0 M907.7,663.2h0 M908.3,673.4h0 M922.3,544.4h0 M923.7,556.8h0 M921.2,567.6h0 M920.2,581.4h0 M923.9,590.1h0 M919.7,601.9h0 M921,616.2h0 M923.5,627.6h0 M919.7,639.1h0 M922.6,650.3h0 M923.8,659.6h0 M920.1,674.1h0 M935.9,544.4h0 M934.8,555.3h0 M934.4,568.8h0 M932.3,578.8h0 M932.9,589.7h0 M933.9,601.6h0 M932.8,613.2h0 M934.8,624.4h0 M935,636.8h0 M932,651.4h0 M932.8,663.1h0 M935.6,674.7h0 M944.7,544.4h0 M946.1,554.5h0 M948.2,569.2h0 M946.9,579.3h0 M945.6,592.5h0 M946.2,603.4h0 M944.7,613.5h0 M944.3,627.2h0 M946.5,636.6h0 M947.9,648.8h0 M945.9,660h0 M945.3,674.5h0 M957.9,544.4h0 M957.1,556.1h0 M957.8,569.4h0 M956.9,581.4h0 M956.7,592.8h0 M959.3,601.7h0 M958.5,613.7h0 M957.5,625.1h0 M958,640h0 M960.8,651.4h0 M956.8,660.6h0 M960.3,671.3h0 M971.9,544.4h0 M970,558h0 M968.8,569h0 M970.2,578.1h0 M968.7,592.5h0 M971,601.6h0 M970.6,616.2h0 M969.7,626.6h0 M969.3,636.7h0 M972.1,650.5h0 M969.6,659.7h0 M969.1,673.5h0 M983.2,544.4h0 M982.2,554.9h0 M983.7,568.6h0 M984.6,579.8h0 M981.9,589.5h0 M984.2,602.5h0 M984.2,612.8h0 M984.6,625.6h0 M984.7,639.5h0 M983.2,647.8h0 M985,661.3h0 M984.8,672.2h0 M994.1,544.4h0 M997,555.6h0 M994,567.3h0 M995.9,577.5h0 M995.6,591h0 M995.6,601.4h0 M996.4,615.9h0 M997.1,625.6h0 M996.4,637.5h0 M996.6,647.9h0 M997.1,663.2h0 M995.5,673.2h0 M1007.9,544.4h0 M1008,554.2h0 M1009.9,566.7h0 M1006.4,577.9h0 M1006.7,592.5h0 M1005.7,601.3h0 M1008.7,613.4h0 M1005.7,626.7h0 M1008.1,638.1h0 M1008.7,648.1h0 M1009.4,662.3h0 M1005.8,671.6h0 M1020.1,544.4h0 M1020.1,555.2h0 M1018.4,567.4h0 M1018.5,579.9h0 M1021.7,589.8h0 M1020.4,603.9h0 M1018.6,615.9h0 M1022,625.9h0 M1019.8,639.4h0 M1020.2,649.3h0 M1022,662.5h0 M1019.4,672.1h0 M1031.7,544.4h0 M1032.1,558h0 M1033.7,569.5h0 M1033.8,580.9h0 M1030.4,591.3h0 M1034.4,604.6h0 M1031.3,614.3h0 M1033,625.8h0 M1032.5,636.3h0 M1032.1,649.7h0 M1030.3,660h0 M1034.5,674.2h0 M1046.6,544.4h0 M1045.3,557.3h0 M1046.4,569.3h0 M1042.7,580.1h0 M1043.7,591.9h0 M1043.7,603.1h0 M1046.6,615.1h0 M1043.6,626.4h0 M1044.4,639.8h0 M1043.8,648.9h0 M1045.3,659.9h0 M1045.1,674.9h0 M1057.1,544.4h0 M1056,556h0 M1057.1,566.4h0 M1055.3,578h0 M1056.1,590.8h0 M1056.1,601.9h0 M1055.2,614.8h0 M1058.5,626.7h0 M1057.3,638.6h0 M1055.7,650.5h0 M1056.8,661.6h0 M1057.5,673h0 M1068.5,544.4h0 M1068.2,555h0 M1069.4,567.3h0 M1069.7,577.5h0 M1068.7,592.6h0 M1068.1,603.1h0 M1069.3,613.7h0 M1071.4,625.5h0 M1070.5,636.6h0 M1067.4,651.2h0 M1069,659.6h0 M1068.8,672.9h0 M1082.6,544.4h0 M1079.9,555h0 M1083.6,568.8h0 M1080.1,578.8h0 M1081,591.9h0 M1082.1,604.3h0 M1083,614.7h0 M1082.7,627.3h0 M1082.7,637.9h0 M1082.9,650.5h0 M1083.4,659.9h0 M1083.2,671.1h0 M1095.1,544.4h0 M1094.3,556.1h0 M1095.9,568.1h0 M1093.5,580.6h0 M1095.5,591.6h0 M1093.4,602.7h0 M1093.7,615.5h0 M1093,625.9h0 M1094.1,637.5h0 M1093.1,650.8h0 M1095.4,661.4h0 M1093.7,671.8h0 M1105.3,544.4h0 M1104.6,556.4h0 M1106.6,566.2h0 M1108,578.8h0 M1107.7,592.6h0 M1108.2,601.7h0 M1105.9,616.2h0 M1104,624.5h0 M1106.5,638h0 M1108,650.8h0 M1106.4,663.4h0 M1106.3,673.2h0 M1119.3,544.4h0 M1118,555.5h0 M1118.9,567.2h0 M1120.5,580.2h0 M1118.6,589.6h0 M1117.9,602.5h0 M1118.8,614.9h0 M1120.2,628.2h0 M1118.4,637.8h0 M1119,651.7h0 M1117.8,661.5h0 M1119.9,671.8h0 M1130,544.4h0 M1132.9,557.4h0 M1130.9,566.2h0 M1132.5,580.3h0 M1132.2,593.2h0 M1132.5,602.6h0 M1129.3,613.8h0 M1130.9,626.3h0 M1129.4,636.7h0 M1131.4,650.1h0 M1130.2,663.4h0 M1131.4,671.3h0 M1142.7,544.4h0 M1144.4,555.3h0 M1143.9,565.8h0 M1142.2,580.9h0 M1143.5,591.9h0 M1141.8,602.9h0 M1143.3,613.7h0 M1143.7,626.4h0 M1145.3,638.3h0 M1142.7,648.2h0 M1141.6,662.4h0 M1141.4,671.5h0 M1154,544.4h0 M1155.5,557.4h0 M1155.9,569h0 M1153.5,577.5h0 M1156.6,590.5h0 M1156.3,602.3h0 M1153.9,613.7h0 M1153.6,627.9h0 M1155.8,637.4h0 M1155.2,649.2h0 M1153.4,663h0 M1155.8,674.9h0 M1167.4,544.4h0 M1168.2,555.1h0 M1165.7,569.5h0 M1169.3,578.8h0 M1169.5,592.5h0 M1166.8,603.3h0 M1169.7,614.6h0 M1169.7,625.3h0 M1167.2,638.9h0 M1166.5,648.9h0 M1169.4,661.3h0 M1169,672.1h0 M1178.6,544.4h0 M1179.4,554.8h0 M1182.1,567h0 M1180.3,578h0 M1180.1,590.7h0 M1179.6,601.2h0 M1178.3,615.9h0 M1179.3,625.3h0 M1178.6,637.1h0 M1178.8,647.8h0 M1180.7,660.8h0 M1178.5,673.9h0 M1190.5,544.4h0 M1191.3,557.4h0 M1190.7,567.6h0 M1193.8,580.7h0 M1190.8,590.6h0 M1193.3,602.4h0 M1194.3,613.4h0 M1194.3,626.3h0 M1191.1,637.8h0 M1190.7,650.5h0 M1191.2,663h0 M1192.7,672.6h0 M1203.5,544.4h0 M1205.1,555h0 M1206.2,566.3h0 M1204.7,579.7h0 M1203.6,592.3h0 M1204.1,603.5h0 M1204.9,613.8h0 M1204.1,624.6h0 M1203.2,639.4h0 M1203.8,650.4h0 M1202.9,661.6h0 M1204,673.1h0 M1216,544.4h0 M1215,555.3h0 M1215.7,566.3h0 M1217.9,578.6h0 M1216.5,592.8h0 M1218.1,604.4h0 M1218.5,613.1h0 M1215.9,624.4h0 M1217.7,638.7h0 M1216.2,649.4h0 M1217.6,662.2h0 M1215.8,674.5h0 M1228.5,544.4h0 M1229.8,554.8h0 M1227.5,569.5h0 M1230.2,580.4h0 M1227.2,589.4h0 M1227.7,601.7h0 M1228.3,614.1h0 M1227.2,625.5h0 M1229.8,636.7h0 M1230.7,650h0 M1230.2,660.4h0 M1228.9,673.8h0 M1240.8,544.4h0 M1239.3,557.4h0 M1242.7,566.9h0 M1239.5,580.9h0 M1242,589.4h0 M1240.4,601.3h0 M1242.8,613.4h0 M1243.3,627.3h0 M1239.7,638.8h0 M1241,650.7h0 M1242.9,660.5h0 M1239.7,674.9h0 M1253.5,544.4h0 M1255.7,556.9h0 M1254.8,569.1h0 M1254.4,579.3h0 M1251.8,592h0 M1253.5,602.9h0 M1255.7,613.1h0 M1255,624.5h0 M1254.7,639.2h0 M1252.7,649.9h0 M1255.9,662h0 M1254,672.1h0 M1264.2,544.4h0 M1265.5,555.7h0 M1264.8,567h0 M1264.5,580.3h0 M1266.8,590.2h0 M1265,603h0 M1265.9,616.3h0 M1265.4,625.5h0 M1267.8,636.6h0 M1266.4,649h0 M1267.5,661.6h0 M1267.2,671.8h0 M1279.1,544.4h0 M1278.8,555.9h0 M1279.6,569.1h0 M1276.7,578.7h0 M1277.8,590h0 M1276.5,602h0 M1277.1,615.4h0 M1278.2,624.8h0 M1277.6,637.9h0 M1277.8,648.4h0 M1276.5,659.4h0 M1280.6,674.1h0 M1288.9,544.4h0 M1291.7,558h0 M1291,566.2h0 M1290.7,579.2h0 M1289.3,591.4h0 M1288.5,604.6h0 M1291.3,615.1h0 M1292.6,626.9h0 M1289.6,637h0 M1289.1,647.8h0 M1291.9,662.8h0 M1289.8,671.8h0 M1303.6,544.4h0 M1304.5,557.8h0 M1301.5,568.9h0 M1304.5,580.5h0 M1302.2,589.9h0 M1304.4,602.2h0 M1302.4,614.8h0 M1302.4,627.6h0 M1301.9,636.2h0 M1303.3,650.2h0 M1304.4,662.2h0 M1304.8,674.9h0 M1315.3,544.4h0 M1315.3,554.7h0 M1314.4,568.1h0 M1313.5,580.3h0 M1313.8,591h0 M1317.4,601.3h0 M1313.3,614.4h0 M1313.9,627.2h0 M1313.1,639.4h0 M1316.9,650.8h0 M1315,660.5h0 M1316,673.2h0 M1327.3,544.4h0 M1326.9,555.9h0 M1328.3,569.1h0 M1329.4,578.2h0 M1326.7,591h0 M1327.9,602.3h0 M1326.3,612.9h0 M1326.8,626.1h0 M1329.7,639.6h0 M1329.2,651.6h0 M1329.6,661.9h0 M1329,671.3h0 M1340.7,544.4h0 M1340.4,555.3h0 M1340.2,569.6h0 M1339.8,580.1h0 M1339,590.6h0 M1341.6,601h0 M1338.5,615.3h0 M1339.7,624.6h0 M1340.6,637.5h0 M1340.3,649.4h0 M1340,661.7h0 M1339.4,671.6h0 M1350.8,544.4h0 M1353.9,556.3h0 M1350.5,569.2h0 M1351.1,577.9h0 M1352.3,590.2h0 M1352.2,603.1h0 M1351,614.9h0 M1350.5,626.4h0 M1352.6,636.3h0 M1351.8,648h0 M1351.9,662.9h0 M1352.4,674h0 M1365.6,544.4h0 M1362.8,558.1h0 M1365.5,566.2h0 M1366,579.1h0 M1363.1,593h0 M1364.8,604h0 M1362.9,615.7h0 M1362.6,625.2h0 M1363.9,636.1h0 M1364.9,648.6h0 M1363.6,662.2h0 M1364.2,674.7h0 M1377.3,544.4h0 M1378.4,556.4h0 M1378.6,569.3h0 M1375.3,580.5h0 M1376.1,592.3h0 M1377.6,604.2h0 M1375.1,614.1h0 M1377.8,628.1h0 M1377.8,636.2h0 M1377.3,648.1h0 M1377,662.6h0 M1375.1,674.8h0 M1389.9,544.4h0 M1388,554.9h0 M1388.9,569.2h0 M1389.5,578h0 M1387,589.6h0 M1390.4,601.6h0 M1389.3,613.8h0 M1389.9,625.8h0 M1387.5,639.5h0 M1389.3,650.5h0 M1390.5,663.2h0 M1387,672.5h0 M1399.9,544.4h0 M1401.4,557.6h0 M1402.7,565.9h0 M1400,580.8h0 M1402.2,590.8h0 M1401.3,601.5h0 M1402.9,614.2h0 M1403,626.7h0 M1399.5,637.3h0 M1400.2,651.3h0 M1401.8,659.6h0 M1399.9,672.5h0 M1413.6,544.4h0 M1414,555.7h0 M1413.1,565.8h0 M1414,578.8h0 M1411.6,591h0 M1415.8,601.1h0 M1412.1,615.3h0 M1412.7,625.4h0 M1413.7,637h0 M1414,649.8h0 M1415.7,663.4h0 M1411.7,673.3h0 M1427.2,544.4h0 M1427.6,557.2h0 M1426.6,568.3h0 M1425.4,578.6h0 M1427.3,592.7h0 M1427.9,603.6h0 M1425.1,615.7h0 M1427.1,626.3h0 M1426.6,637.4h0 M1426.2,649.3h0 M1424.1,660.7h0 M1425.2,675.1h0" fill="none" stroke="#a8a8a8" stroke-width="2" stroke-linecap="round"/></g>
<g clip-path="url(#cup)"><path d="M508.8,635.2 L786.6,522.4 M523,617.2 L533.7,645.6 M534.7,612.4 L546.5,640.9 M546.4,607.7 L559.3,636.1 M558,603 L569.2,631.4 M569.7,598.2 L582,626.7 M581.4,593.5 L592.7,621.9 M593,588.8 L605.6,617.2 M604.7,584 L615,612.4 M616.4,579.3 L627.9,607.7 M628,574.5 L640.7,603 M639.7,569.8 L650.6,598.2 M651.4,565.1 L662.2,593.5 M663,560.3 L673.2,588.8 M674.7,555.6 L685.3,584 M686.4,550.9 L697.3,579.3 M698,546.1 L710.1,574.5 M709.7,541.4 L720.5,569.8 M721.4,536.6 L732.6,565.1 M733,531.9 L743.7,560.3 M744.7,527.2 L756.5,555.6 M756.4,522.4 L768.9,550.9 M768,517.7 L780,546.1 M779.7,513 L790.4,541.4" fill="none" stroke="#a8a8a8" stroke-width="1.15"/></g>
<g clip-path="url(#cdn)"><path d="M1105.4,531.1 L1375.2,640 M1109.7,520.6 L1098.8,549.1 M1121.2,525.2 L1111,553.7 M1132.7,529.9 L1121.5,558.3 M1144.1,534.5 L1131.5,563 M1155.6,539.2 L1145,567.6 M1167.1,543.8 L1156.7,572.3 M1178.6,548.4 L1166.7,576.9 M1190.1,553.1 L1177.6,581.5 M1201.6,557.7 L1189.3,586.2 M1213.1,562.3 L1201.7,590.8 M1224.6,567 L1214.2,595.4 M1236.1,571.6 L1225,600.1 M1247.6,576.3 L1237.3,604.7 M1259.1,580.9 L1246.8,609.4 M1270.6,585.5 L1258.6,614 M1282.1,590.2 L1271.3,618.6 M1293.6,594.8 L1282.5,623.3 M1305.1,599.4 L1293.3,627.9 M1316.6,604.1 L1305.6,632.5 M1328.1,608.7 L1316.1,637.2 M1339.6,613.4 L1326.8,641.8 M1351.1,618 L1339.3,646.5 M1362.5,622.6 L1349.8,651.1 M1374,627.3 L1362.9,655.7" fill="none" stroke="#a8a8a8" stroke-width="1.15"/></g>
<g clip-path="url(#ccap)"><path d="M762,526.2 L768,524.3 L774,522.5 L780,520.7 L786,518.9 L792,517 L798,515.2 L804,513.4 L810,511.5 L816,509.7 L822,507.9 L828,507.1 L834,507.1 L840,507.1 L846,507.1 L852,507.1 L858,507.1 L864,508.6 L870,510.4 L876,512.2 L882,514 L888,515.8 L894,517.6 L900,519.4 L906,521.2 L912,523 L918,524.9 L924,526.7 M750,534.7 L756,533.5 L762,532.2 L768,531 L774,529.8 L780,528.6 L786,527.4 L792,526.2 L798,524.9 L804,523.7 L810,522.5 L816,521.3 L822,520.1 L828,519.5 L834,519.5 L840,519.5 L846,519.5 L852,519.5 L858,519.5 L864,520.6 L870,521.8 L876,523 L882,524.2 L888,525.4 L894,526.6 L900,527.8 L906,529 L912,530.2 L918,531.4 L924,532.6 L930,533.8 L936,535 L942,536.2 L948,537.4 L954,538.3 M762,538.3 L768,537.7 L774,537.1 L780,536.5 L786,535.9 L792,535.3 L798,534.7 L804,534.1 L810,533.4 L816,532.8 L822,532.2 L828,532 L834,532 L840,532 L846,532 L852,532 L858,532 L864,532.5 L870,533.1 L876,533.7 L882,534.3 L888,534.9 L894,535.5 L900,536.1 L906,536.7 L912,537.3 L918,537.9 L924,538.5 M763,518.7 L756.7,545 M774.4,514.1 L769.3,545 M785.8,509.4 L781.8,545 M797.3,504.8 L793.4,545 M808.7,500.1 L806.1,545 M820.1,495.5 L817.5,545 M831.6,493.7 L831.7,545 M843,493.7 L843.2,545 M854.5,493.7 L856.4,545 M865.9,496.5 L866.8,545 M877.3,501 L880.2,545 M888.8,505.6 L892.7,545 M900.2,510.2 L904.3,545 M911.7,514.8 L916.1,545 M923.1,519.4 L928.5,545 M934.5,524 L940.8,545" fill="none" stroke="#adadad" stroke-width="1.1"/></g>
<g clip-path="url(#cberm)"><path d="M958.6,532 V545 M970.9,532 V545 M983.2,532 V545 M995.5,532 V545 M1007.8,532 V545 M1020.1,532 V545 M1032.4,532 V545 M1044.7,532 V545 M1057,532 V545 M1069.3,532 V545 M1081.6,532 V545 M1093.9,532 V545 M1106.2,532 V545 M1118.5,532 V545 M1130.8,532 V545" fill="none" stroke="#b6b6b6" stroke-width="1"/></g>
<g clip-path="url(#crf)"><path d="M1350,624 V637 M1362.3,624 V637 M1374.7,624 V637 M1387,624 V637 M1399.4,624 V637 M1411.7,624 V637 M1424.1,624 V637" fill="none" stroke="#b6b6b6" stroke-width="1"/></g>
<path d="M477.3,636.5h0 M477.2,647.9h0 M477.4,659.3h0 M477.3,671h0 M477.1,682.5h0 M477.1,694.4h0 M477.1,705.9h0 M489.6,636.1h0 M489.4,647.8h0 M489.6,659.5h0 M489.5,671.1h0 M489.5,682.6h0 M489.7,694.4h0 M489.4,705.9h0 M502,636.2h0 M502.1,647.7h0 M501.9,659.6h0 M501.8,671.1h0 M501.7,682.8h0 M502,694.3h0 M502.1,705.8h0 M514.3,636.3h0 M514.4,648.1h0 M514.2,659.6h0 M514.1,671.2h0 M514.3,682.9h0 M514.4,694.2h0 M514.2,706h0 M526.5,636.1h0 M526.4,648h0 M526.5,659.4h0 M526.6,671.2h0 M526.4,682.7h0 M526.6,694.5h0 M526.7,706h0 M538.9,636.5h0 M539.1,647.8h0 M538.8,659.4h0 M538.8,671.1h0 M539,682.6h0 M538.8,694.3h0 M538.9,705.9h0 M551.3,636.3h0 M551.4,647.7h0 M551.5,659.6h0 M551.4,671.2h0 M551.3,682.7h0 M551.1,694.4h0 M551.1,705.7h0 M563.6,636.1h0 M563.5,647.8h0 M563.5,659.4h0 M563.5,671.2h0 M563.7,682.6h0 M563.6,694.2h0 M563.6,705.7h0 M576,636.3h0 M575.8,647.7h0 M575.9,659.4h0 M576.1,671h0 M575.8,682.9h0 M576,694.2h0 M576,705.7h0 M588.5,636.4h0 M588.3,647.8h0 M588.2,659.6h0 M588.4,671.2h0 M588.3,682.6h0 M588.5,694.5h0 M588.5,706h0 M600.6,636.3h0 M600.6,647.7h0 M600.5,659.4h0 M600.6,671.2h0 M600.9,682.7h0 M600.9,694.5h0 M600.9,705.8h0 M612.9,636.2h0 M613.1,648.1h0 M613.2,659.5h0 M613.1,671.2h0 M612.9,682.8h0 M613.2,694.4h0 M613.2,705.9h0 M625.3,636.4h0 M625.6,647.9h0 M625.4,659.7h0 M625.5,671h0 M625.3,682.6h0 M625.6,694.4h0 M625.3,706h0 M637.7,636.3h0 M637.6,647.7h0 M637.9,659.6h0 M637.8,671.3h0 M637.7,682.8h0 M637.9,694.2h0 M637.7,705.8h0 M650,636.3h0 M650,648.1h0 M650,659.5h0 M650.1,671.3h0 M650.1,682.9h0 M650.1,694.3h0 M650.1,705.7h0 M662.3,636.4h0 M662.3,647.9h0 M662.5,659.5h0 M662.4,671.1h0 M662.5,682.8h0 M662.3,694.3h0 M662.3,705.8h0 M674.8,636.4h0 M675,647.9h0 M674.8,659.5h0 M674.8,671.2h0 M674.8,682.7h0 M674.8,694.5h0 M674.9,706.1h0 M687.2,636.5h0 M687.3,647.8h0 M687,659.5h0 M687,671h0 M687,682.8h0 M687.3,694.5h0 M687,706h0 M699.7,636.5h0 M699.4,648.1h0 M699.5,659.5h0 M699.7,671.2h0 M699.4,682.7h0 M699.5,694.2h0 M699.4,705.8h0 M711.9,636.3h0 M711.7,647.8h0 M711.9,659.5h0 M711.7,671.3h0 M712,682.9h0 M711.7,694.2h0 M711.7,706h0 M724.2,636.5h0 M724.3,647.8h0 M724.1,659.7h0 M724.2,671.2h0 M724,682.5h0 M724.3,694.3h0 M724,706.1h0 M736.4,636.4h0 M736.4,648h0 M736.5,659.4h0 M736.6,671.3h0 M736.5,682.6h0 M736.6,694.2h0 M736.4,705.8h0 M748.8,636.2h0 M749,647.8h0 M748.9,659.4h0 M748.8,670.9h0 M748.8,682.5h0 M749,694.3h0 M748.8,705.9h0 M761.4,636.3h0 M761.2,648h0 M761.2,659.5h0 M761.3,671.3h0 M761.2,682.8h0 M761.3,694.4h0 M761.2,705.8h0 M773.4,636.4h0 M773.5,647.8h0 M773.4,659.6h0 M773.7,671.2h0 M773.5,682.6h0 M773.5,694.3h0 M773.5,705.9h0 M786.1,636.3h0 M785.8,648.1h0 M785.9,659.4h0 M785.8,671.1h0 M785.9,682.7h0 M785.8,694.3h0 M785.8,705.8h0 M798.1,636.1h0 M798.2,647.8h0 M798.3,659.5h0 M798.4,671.2h0 M798.4,682.9h0 M798.3,694.2h0 M798.5,705.8h0 M810.5,636.4h0 M810.8,648h0 M810.7,659.6h0 M810.5,671.1h0 M810.7,682.8h0 M810.8,694.4h0 M810.7,706.1h0 M822.9,636.1h0 M822.9,647.8h0 M822.8,659.6h0 M823,671.2h0 M823.1,682.8h0 M823,694.1h0 M823.1,706h0 M835.6,635.5h0 M835.8,647.5h0 M834.6,659.1h0 M835.8,670.6h0 M835.8,683.6h0 M835.3,694.1h0 M835.3,706.2h0 M848,635.5h0 M847.1,647.5h0 M848.1,659.1h0 M847.8,670.2h0 M846.9,682.3h0 M848,694.6h0 M848,705.5h0 M860,635.8h0 M860.8,647.5h0 M860.9,660.4h0 M859.2,671h0 M860.6,683.5h0 M860,693.9h0 M859.5,706.7h0 M871.8,637.8h0 M873.2,648.2h0 M873,660h0 M873.1,671.5h0 M871.9,683.4h0 M872.4,693.4h0 M871.5,705.9h0 M884.1,638.7h0 M884.4,650.3h0 M883.9,660.8h0 M885.4,670.4h0 M885.5,683.1h0 M885.5,693.9h0 M884.5,705.7h0 M896.8,640.1h0 M896.7,649.7h0 M896.4,661.4h0 M896.7,671.9h0 M896.6,682.3h0 M897.1,693.7h0 M896.9,706.7h0 M909.7,642.2h0 M910.2,651.4h0 M909.8,660.4h0 M909.9,671h0 M909.9,683h0 M909.1,693.5h0 M910.2,705.2h0 M921.4,643.1h0 M922.7,651.7h0 M922.1,661.3h0 M921.9,670.9h0 M921.2,682.1h0 M921.3,695h0 M921.8,705.4h0 M934.1,643.3h0 M933.6,652.2h0 M933.9,661.3h0 M933.7,670.7h0 M934.3,683.4h0 M934.6,694.1h0 M934,705.9h0 M945.7,644.7h0 M947.3,653.1h0 M946.5,662.7h0 M947.2,670.6h0 M946.1,682.2h0 M946.3,694.2h0 M947.3,706.5h0 M958,646.8h0 M959.6,654.6h0 M959,662h0 M958.7,671.9h0 M959.4,683.3h0 M959.7,693.8h0 M958.1,705.3h0 M972,648h0 M971.5,655.9h0 M971.1,663.4h0 M970.4,671.6h0 M970.7,683.5h0 M971.5,693.9h0 M970.5,705.5h0 M982.9,648.1h0 M983.6,656.4h0 M983.3,663.2h0 M983.7,670.2h0 M983.2,682.6h0 M984.4,694.6h0 M984.2,705.9h0 M996.7,650.5h0 M995.6,656.2h0 M995.9,664.4h0 M995.8,670.7h0 M996.2,683.5h0 M995.4,693.5h0 M995.6,705.8h0 M1008.8,651.8h0 M1008.3,657.4h0 M1009.1,664.2h0 M1008.8,670.6h0 M1007.7,683.2h0 M1007.9,695.1h0 M1008.2,705.3h0 M1020.9,659.5h0 M1020,670.9h0 M1020.1,683.6h0 M1020,693.5h0 M1019.8,705.7h0 M1033.4,660.5h0 M1033.7,670.8h0 M1032.4,683.5h0 M1033.4,693.5h0 M1033.2,705.7h0 M1044.7,659.5h0 M1044.9,670.8h0 M1046.1,682h0 M1046.1,693.8h0 M1045,706.5h0 M1056.8,661.2h0 M1057.4,671.9h0 M1057.1,682.5h0 M1058.4,693.5h0 M1057.5,706.5h0 M1069.2,661.2h0 M1070.8,670.7h0 M1070.4,683.4h0 M1069.7,693.9h0 M1070.8,706.1h0 M1082,662.5h0 M1081.5,671.6h0 M1083.1,682.9h0 M1083.1,693.4h0 M1081.9,705.9h0 M1094.5,663.2h0 M1094.6,671.1h0 M1095.5,682.1h0 M1095.2,694.7h0 M1095.3,706.4h0 M1106.7,670.9h0 M1107.6,681.9h0 M1106.5,694.8h0 M1106.6,705.1h0 M1119.1,672h0 M1120.1,683.6h0 M1119,693.6h0 M1118.7,705.9h0 M1131.3,671h0 M1132,683h0 M1132.2,694.9h0 M1132,705.2h0 M1144.2,670.9h0 M1144.5,682.2h0 M1143.6,693.8h0 M1143.5,706.6h0 M1156.3,672h0 M1156.5,682.2h0 M1157,694.6h0 M1157.3,705.2h0 M1169.4,671.8h0 M1168,682.3h0 M1168.1,693.7h0 M1169.7,706h0 M1181.8,671h0 M1180.7,683.2h0 M1182,693.6h0 M1181.3,706.1h0 M1192.9,670.6h0 M1193.1,682.9h0 M1193.8,693.8h0 M1192.6,705.6h0 M1205.5,670.6h0 M1206.4,682.8h0 M1205.1,693.6h0 M1205.7,706h0 M1217.6,671.5h0 M1218,682.3h0 M1217.9,695.1h0 M1217.9,706h0 M1230.7,671.3h0 M1230.5,682.6h0 M1230.6,694.2h0 M1230.4,706.1h0 M1242.9,671.3h0 M1242.9,682.6h0 M1242.7,694.3h0 M1243,706.1h0 M1255.2,671.1h0 M1255.1,682.6h0 M1255.3,694.5h0 M1255.1,705.9h0 M1267.5,671h0 M1267.8,682.9h0 M1267.6,694.1h0 M1267.8,705.9h0 M1280.1,671h0 M1280.1,682.6h0 M1279.9,694.4h0 M1280.1,705.8h0 M1292.3,671.1h0 M1292.1,682.6h0 M1292.4,694.5h0 M1292.1,705.9h0 M1304.8,670.9h0 M1304.7,682.7h0 M1304.7,694.2h0 M1304.6,705.9h0 M1317,671.1h0 M1316.8,682.7h0 M1317,694.2h0 M1317.1,706h0 M1329.3,670.9h0 M1329.2,682.7h0 M1329.2,694.3h0 M1329.4,705.7h0 M1341.8,671.2h0 M1341.7,682.5h0 M1341.7,694.3h0 M1341.9,705.8h0 M1354.1,671.2h0 M1353.9,682.9h0 M1354,694.5h0 M1354.2,705.8h0 M1366.2,671h0 M1366.5,682.6h0 M1366.6,694.2h0 M1366.5,705.8h0 M1378.6,671h0 M1378.8,682.6h0 M1378.6,694.2h0 M1378.6,706.1h0 M1391,671.2h0 M1390.9,682.7h0 M1391.2,694.2h0 M1391.2,705.9h0 M1403.3,671.3h0 M1403.5,682.7h0 M1403.6,694.2h0 M1403.6,705.9h0 M1415.8,671h0 M1415.9,682.5h0 M1415.9,694.2h0 M1415.9,706.1h0" fill="none" stroke="#9a9a9a" stroke-width="2.3" stroke-linecap="round"/>
<path d="M700,624.7 L687.6,612.4 L744.5,594.6 L806,576 L843,568.4 L867.5,566.3 L892,568.4 L913.6,574.6 L959.7,580.7 L1000,584.7 L1020.8,582.4 L1067,577.8 L1107,571.6 L1134.8,576.2 L1158,580.8 L1205.7,594 L1245,604 L1300,624.5 L1336,637.5 L1364,637.6 L1353.6,650.8 L1329,661.6 L1134.8,661.6 M763,624.7 L756.8,612.4 L806,599 L852,590 L883,587.8 L913.6,593 L941.3,600 L1000,599.2 L1027,600.9 L1107,593.2 L1158,599.3 L1205.7,617.8 L1267.3,632.4 L1309,649.3 L1292,661.6 M861.4,624.7 L856.7,612.4 L892,608.4 L929,611.5 L1000,617.6 L1036,617 L1098,613 L1158,620 L1205.7,632.4 L1259.6,649.3 L1252,661.6 M1037.8,647.5 L1036.2,632.4 L1082.4,630.8 L1128.7,633.9 L1175,641.6 L1212,649.3 L1205.7,661.6 M590,614.5 L592,622 L602,620 L606,614 L613,616 L617,620 L628,621 M838,544.4 L848,548 L853,544.4 M908,544.4 L916,549 L926,546 L930,544.4 M946,544.4 L944,556 L968,560 L985,561 L990,556 L978,544.4 M958,544.4 L964,552 L972,544.4 M1010,559 L1018,545 L1025,554 L1021,556 L1014,566 Z M1096,544.4 L1097,556 L1110,560 L1121,566 L1130,558 L1128,553 M1160,566.5 L1176,574 L1200,584 L1222,594 L1230,599 L1236,600 L1238,597.5 M1000,631 L1000,637 L1005,642 L1010,637 L1011,631 Z M1392,661.6 L1398,658.5 L1424,658.5" fill="none" stroke="#101010" stroke-width="1" stroke-linejoin="round"/>
<path d="M890.6,544.4 L861,624.7 M985,544.4 L1015.5,646" fill="none" stroke="#000" stroke-width="1"/>
<path d="M504.5,624.7 L824.5,494.7 L859,494.7 L952.6,532.2 L1138.4,532.2 L1367.6,624.7 L1424,624.7" fill="none" stroke="#000" stroke-width="1.9" stroke-linejoin="miter"/>
<path d="M565,624.7 L762,544.4 L1108,544.4 L1336.6,636.9 L1424,636.9" fill="none" stroke="#000" stroke-width="1.9"/>
<path d="M470,624.7 L858,624.7 L1134.8,661.6 L1424,661.6" fill="none" stroke="#000" stroke-width="1.9"/>
<path d="M892,507.4 V588.3 M941,527.6 V596 M1157.3,539.8 V625.5" stroke="#000" stroke-width="1.6" fill="none"/>
<rect x="617" y="612.5" width="27" height="11" fill="#fff"/><text x="627.5" y="627.6" font-size="12.5" fill="#222">0</text>
<g transform="rotate(16 1007 603)"><rect x="991" y="594" width="32" height="18" fill="#fff"/><text x="1000" y="607.5" font-size="10.5" font-style="italic" fill="#222">40</text></g>
<path d="M480.2,711 V718 M480.2,713.5 L486.2,717.3 M478.2,718 L472.7,728.5 M479.7,718 L481.2,728.5 M492.6,711 V718 M492.6,713.5 L498.6,717.3 M490.6,718 L485.1,728.5 M492.1,718 L493.6,728.5 M504.9,711 V718 M504.9,713.5 L510.9,717.3 M502.9,718 L497.4,728.5 M504.4,718 L505.9,728.5 M517.2,711 V718 M517.2,713.5 L523.2,717.3 M515.2,718 L509.8,728.5 M516.8,718 L518.2,728.5 M529.6,711 V718 M529.6,713.5 L535.6,717.3 M527.6,718 L522.1,728.5 M529.1,718 L530.6,728.5 M542,711 V718 M542,713.5 L548,717.3 M540,718 L534.5,728.5 M541.5,718 L543,728.5 M554.3,711 V718 M554.3,713.5 L560.3,717.3 M552.3,718 L546.8,728.5 M553.8,718 L555.3,728.5 M566.7,711 V718 M566.7,713.5 L572.7,717.3 M564.7,718 L559.2,728.5 M566.2,718 L567.7,728.5 M579,711 V718 M579,713.5 L585,717.3 M577,718 L571.5,728.5 M578.5,718 L580,728.5 M591.4,711 V718 M591.4,713.5 L597.4,717.3 M589.4,718 L583.9,728.5 M590.9,718 L592.4,728.5 M603.7,711 V718 M603.7,713.5 L609.7,717.3 M601.7,718 L596.2,728.5 M603.2,718 L604.7,728.5 M616.1,711 V718 M616.1,713.5 L622.1,717.3 M614.1,718 L608.6,728.5 M615.6,718 L617.1,728.5 M628.4,711 V718 M628.4,713.5 L634.4,717.3 M626.4,718 L620.9,728.5 M627.9,718 L629.4,728.5 M640.8,711 V718 M640.8,713.5 L646.8,717.3 M638.8,718 L633.3,728.5 M640.3,718 L641.8,728.5 M653.1,711 V718 M653.1,713.5 L659.1,717.3 M651.1,718 L645.6,728.5 M652.6,718 L654.1,728.5 M665.5,711 V718 M665.5,713.5 L671.5,717.3 M663.5,718 L658,728.5 M665,718 L666.5,728.5 M677.8,711 V718 M677.8,713.5 L683.8,717.3 M675.8,718 L670.3,728.5 M677.3,718 L678.8,728.5 M690.2,711 V718 M690.2,713.5 L696.2,717.3 M688.2,718 L682.7,728.5 M689.7,718 L691.2,728.5 M702.5,711 V718 M702.5,713.5 L708.5,717.3 M700.5,718 L695,728.5 M702,718 L703.5,728.5 M714.9,711 V718 M714.9,713.5 L720.9,717.3 M712.9,718 L707.4,728.5 M714.4,718 L715.9,728.5 M727.2,711 V718 M727.2,713.5 L733.2,717.3 M725.2,718 L719.7,728.5 M726.7,718 L728.2,728.5 M739.6,711 V718 M739.6,713.5 L745.6,717.3 M737.6,718 L732.1,728.5 M739.1,718 L740.6,728.5 M751.9,711 V718 M751.9,713.5 L757.9,717.3 M749.9,718 L744.4,728.5 M751.4,718 L752.9,728.5 M764.3,711 V718 M764.3,713.5 L770.3,717.3 M762.3,718 L756.8,728.5 M763.8,718 L765.3,728.5 M776.6,711 V718 M776.6,713.5 L782.6,717.3 M774.6,718 L769.1,728.5 M776.1,718 L777.6,728.5 M789,711 V718 M789,713.5 L795,717.3 M787,718 L781.5,728.5 M788.5,718 L790,728.5 M801.3,711 V718 M801.3,713.5 L807.3,717.3 M799.3,718 L793.8,728.5 M800.8,718 L802.3,728.5 M813.7,711 V718 M813.7,713.5 L819.7,717.3 M811.7,718 L806.2,728.5 M813.2,718 L814.7,728.5 M826,711 V718 M826,713.5 L832,717.3 M824,718 L818.5,728.5 M825.5,718 L827,728.5 M838.4,711 V718 M838.4,713.5 L844.4,717.3 M836.4,718 L830.9,728.5 M837.9,718 L839.4,728.5 M850.7,711 V718 M850.7,713.5 L856.7,717.3 M848.7,718 L843.2,728.5 M850.2,718 L851.7,728.5 M863.1,711 V718 M863.1,713.5 L869.1,717.3 M861.1,718 L855.6,728.5 M862.6,718 L864.1,728.5 M875.4,711 V718 M875.4,713.5 L881.4,717.3 M873.4,718 L867.9,728.5 M874.9,718 L876.4,728.5 M887.8,711 V718 M887.8,713.5 L893.8,717.3 M885.8,718 L880.3,728.5 M887.3,718 L888.8,728.5 M900.1,711 V718 M900.1,713.5 L906.1,717.3 M898.1,718 L892.6,728.5 M899.6,718 L901.1,728.5 M912.5,711 V718 M912.5,713.5 L918.5,717.3 M910.5,718 L905,728.5 M912,718 L913.5,728.5 M924.8,711 V718 M924.8,713.5 L930.8,717.3 M922.8,718 L917.3,728.5 M924.3,718 L925.8,728.5 M937.2,711 V718 M937.2,713.5 L943.2,717.3 M935.2,718 L929.7,728.5 M936.7,718 L938.2,728.5 M949.5,711 V718 M949.5,713.5 L955.5,717.3 M947.5,718 L942,728.5 M949,718 L950.5,728.5 M961.9,711 V718 M961.9,713.5 L967.9,717.3 M959.9,718 L954.4,728.5 M961.4,718 L962.9,728.5 M974.2,711 V718 M974.2,713.5 L980.2,717.3 M972.2,718 L966.7,728.5 M973.7,718 L975.2,728.5 M986.6,711 V718 M986.6,713.5 L992.6,717.3 M984.6,718 L979.1,728.5 M986.1,718 L987.6,728.5 M998.9,711 V718 M998.9,713.5 L1004.9,717.3 M996.9,718 L991.4,728.5 M998.4,718 L999.9,728.5 M1011.3,711 V718 M1011.3,713.5 L1017.3,717.3 M1009.3,718 L1003.8,728.5 M1010.8,718 L1012.3,728.5 M1023.6,711 V718 M1023.6,713.5 L1029.6,717.3 M1021.6,718 L1016.1,728.5 M1023.1,718 L1024.6,728.5 M1036,711 V718 M1036,713.5 L1042,717.3 M1034,718 L1028.5,728.5 M1035.5,718 L1037,728.5 M1048.3,711 V718 M1048.3,713.5 L1054.3,717.3 M1046.3,718 L1040.8,728.5 M1047.8,718 L1049.3,728.5 M1060.7,711 V718 M1060.7,713.5 L1066.7,717.3 M1058.7,718 L1053.2,728.5 M1060.2,718 L1061.7,728.5 M1073,711 V718 M1073,713.5 L1079,717.3 M1071,718 L1065.5,728.5 M1072.5,718 L1074,728.5 M1085.4,711 V718 M1085.4,713.5 L1091.4,717.3 M1083.4,718 L1077.9,728.5 M1084.9,718 L1086.4,728.5 M1097.7,711 V718 M1097.7,713.5 L1103.7,717.3 M1095.7,718 L1090.2,728.5 M1097.2,718 L1098.7,728.5 M1110.1,711 V718 M1110.1,713.5 L1116.1,717.3 M1108.1,718 L1102.6,728.5 M1109.6,718 L1111.1,728.5 M1122.4,711 V718 M1122.4,713.5 L1128.4,717.3 M1120.4,718 L1114.9,728.5 M1121.9,718 L1123.4,728.5 M1134.8,711 V718 M1134.8,713.5 L1140.8,717.3 M1132.8,718 L1127.3,728.5 M1134.3,718 L1135.8,728.5 M1147.1,711 V718 M1147.1,713.5 L1153.1,717.3 M1145.1,718 L1139.6,728.5 M1146.6,718 L1148.1,728.5 M1159.5,711 V718 M1159.5,713.5 L1165.5,717.3 M1157.5,718 L1152,728.5 M1159,718 L1160.5,728.5 M1171.8,711 V718 M1171.8,713.5 L1177.8,717.3 M1169.8,718 L1164.3,728.5 M1171.3,718 L1172.8,728.5 M1184.1,711 V718 M1184.1,713.5 L1190.1,717.3 M1182.1,718 L1176.6,728.5 M1183.6,718 L1185.1,728.5 M1196.5,711 V718 M1196.5,713.5 L1202.5,717.3 M1194.5,718 L1189,728.5 M1196,718 L1197.5,728.5 M1208.8,711 V718 M1208.8,713.5 L1214.8,717.3 M1206.8,718 L1201.3,728.5 M1208.3,718 L1209.8,728.5 M1221.2,711 V718 M1221.2,713.5 L1227.2,717.3 M1219.2,718 L1213.7,728.5 M1220.7,718 L1222.2,728.5 M1233.5,711 V718 M1233.5,713.5 L1239.5,717.3 M1231.5,718 L1226,728.5 M1233,718 L1234.5,728.5 M1245.9,711 V718 M1245.9,713.5 L1251.9,717.3 M1243.9,718 L1238.4,728.5 M1245.4,718 L1246.9,728.5 M1258.2,711 V718 M1258.2,713.5 L1264.2,717.3 M1256.2,718 L1250.7,728.5 M1257.7,718 L1259.2,728.5 M1270.6,711 V718 M1270.6,713.5 L1276.6,717.3 M1268.6,718 L1263.1,728.5 M1270.1,718 L1271.6,728.5 M1282.9,711 V718 M1282.9,713.5 L1288.9,717.3 M1280.9,718 L1275.4,728.5 M1282.4,718 L1283.9,728.5 M1295.3,711 V718 M1295.3,713.5 L1301.3,717.3 M1293.3,718 L1287.8,728.5 M1294.8,718 L1296.3,728.5 M1307.6,711 V718 M1307.6,713.5 L1313.6,717.3 M1305.6,718 L1300.1,728.5 M1307.1,718 L1308.6,728.5 M1320,711 V718 M1320,713.5 L1326,717.3 M1318,718 L1312.5,728.5 M1319.5,718 L1321,728.5 M1332.3,711 V718 M1332.3,713.5 L1338.3,717.3 M1330.3,718 L1324.8,728.5 M1331.8,718 L1333.3,728.5 M1344.7,711 V718 M1344.7,713.5 L1350.7,717.3 M1342.7,718 L1337.2,728.5 M1344.2,718 L1345.7,728.5 M1357,711 V718 M1357,713.5 L1363,717.3 M1355,718 L1349.5,728.5 M1356.5,718 L1358,728.5 M1369.4,711 V718 M1369.4,713.5 L1375.4,717.3 M1367.4,718 L1361.9,728.5 M1368.9,718 L1370.4,728.5 M1381.7,711 V718 M1381.7,713.5 L1387.7,717.3 M1379.7,718 L1374.2,728.5 M1381.2,718 L1382.7,728.5 M1394.1,711 V718 M1394.1,713.5 L1400.1,717.3 M1392.1,718 L1386.6,728.5 M1393.6,718 L1395.1,728.5 M1406.4,711 V718 M1406.4,713.5 L1412.4,717.3 M1404.4,718 L1398.9,728.5 M1405.9,718 L1407.4,728.5 M1418.8,711 V718 M1418.8,713.5 L1424.8,717.3 M1416.8,718 L1411.3,728.5 M1418.3,718 L1419.8,728.5" fill="none" stroke="#d01818" stroke-width="1"/>
<path d="M471,728.5 H1424" stroke="#d01818" stroke-width="1.2"/>
<path d="M471,717.6 H1424" stroke="#8a0000" stroke-width="2"/>
<rect x="837.5" y="490.5" width="9" height="9" fill="none" stroke="#e02020" stroke-width="1.2"/>
<rect x="936.5" y="596" width="9" height="9" fill="#fff" stroke="#e02020" stroke-width="1.2"/>
<rect x="837.5" y="712.7" width="9" height="9" fill="#fff" stroke="#e02020" stroke-width="1.2"/>
<path d="M842.6,486 V464.8 H891 M1058.6,523 V501.5 H1083.4" fill="none" stroke="#000" stroke-width="1.1"/>
<path d="M838.4,484.5 h8.400 l-4.200,9.500 z M1054.4,522 h8.400 l-4.200,9.500 z" fill="#000"/>
<path d="M588.6,581.6 V557.6 H651.5 M1243.6,569.7 H1307 V593.7" fill="none" stroke="#000" stroke-width="1.1"/>
<g font-size="16" fill="#000" stroke="#000" stroke-width=".25" letter-spacing="-.35">
<text x="491" y="491.2" xml:space="preserve">El.  370</text>
<text x="903.5" y="467.5" xml:space="preserve">El.  371</text>
<text x="1094" y="505.8" xml:space="preserve">El.  365</text>
<text x="613.5" y="548.7">2.5</text><text x="582" y="578">1</text>
<text x="1272" y="563.2">2.5</text><text x="1316" y="585.6">1</text>
<text x="895.4" y="500.7">1</text><text x="943.7" y="520.9">2</text><text x="1160" y="533">3</text>
</g>
<path d="M471,749 H1424" stroke="#6e6e6e" stroke-width="2"/>
<path d="M997.2,732 V749" stroke="#404040" stroke-width="1.2"/>
<text x="996" y="771.8" font-size="14" text-anchor="middle" fill="#111" stroke="#111" stroke-width=".2">100</text>
<text x="933.8" y="809.1" font-size="22.8" fill="#000" xml:space="preserve">Distance - m</text>
</svg>
<div class="abs" style="left:555px;top:447px;width:129px;height:19px;background:#fff;border:1px solid #767676"></div>
<span class="t" style="left:560px;top:451px;font-size:11.1px;color:#555">24.53625, 380.98958 m</span>
<!-- ===== Draw Graph dialog ===== -->
<div id="dlg" class="abs" style="left:800px;top:0;width:620px;height:441px;background:#f0f0f0;font-size:9px;border-bottom:1px solid #777">
<div class="abs" style="left:0;top:0;width:620px;height:27px;background:#fff"></div>
<svg class="abs" style="left:6px;top:11px" width="11" height="11" viewBox="0 0 11 11"><defs><radialGradient id="gl" cx=".35" cy=".3" r=".8"><stop offset="0" stop-color="#e8f4f0"/><stop offset=".45" stop-color="#4a8a80"/><stop offset="1" stop-color="#1c3c48"/></radialGradient></defs><circle cx="5.5" cy="5.5" r="5" fill="url(#gl)"/><path d="M2,4 Q5.500,1 9,4 Q6,5 5.500,8 Q4,5 2,4" fill="#f4faf8" opacity=".85"/></svg>
<span class="t" style="left:21px;top:13px;font-size:8.500px">绘图</span>
<svg class="abs" style="left:530px;top:8px" width="85" height="16" viewBox="1330 8 85 16"><path d="M1337,16.500 h8" stroke="#c8c8c8"/><rect x="1368.500" y="12.500" width="6.500" height="6.500" fill="none" stroke="#111" stroke-width="1"/><path d="M1400.500,12.500 l7,7 M1407.500,12.500 l-7,7" stroke="#111" stroke-width="1"/></svg>
<div class="btn" style="left:88.4px;top:36.4px;width:59.4px;height:14.2px"></div>
<span class="t" style="left:97.5px;top:38.8px;font-size:8.5px;">添加<small>(A)</small></span>
<div class="abs" style="left:139px;top:39px;width:1px;height:9px;background:#8a8a8a"></div>
<svg class="abs" style="left:141px;top:41px" width="6" height="4"><path d="M0,0 h5 l-2.500,3 z" fill="#000"/></svg>
<div class="btn" style="left:158.3px;top:36.4px;width:59.6px;height:14.2px"></div>
<span class="t" style="left:179.5px;top:38.8px;font-size:8.5px;">删除</span>
<div class="box" style="left:8px;top:56px;width:211px;height:112px"></div>
<div class="abs" style="left:68px;top:58px;width:1px;height:16px;background:#e5e5e5"></div><div class="abs" style="left:142px;top:58px;width:1px;height:16px;background:#e5e5e5"></div><div class="abs" style="left:217px;top:58px;width:1px;height:16px;background:#e5e5e5"></div>
<svg class="abs" style="left:102px;top:57px" width="8" height="4"><path d="M0.500,3.500 L3.500,0.800 L6.500,3.500" fill="none" stroke="#707070" stroke-width=".8"/></svg>
<span class="t" style="left:14px;top:61.5px;font-size:8.5px;">名称</span>
<span class="t" style="left:72px;top:62.5px;font-size:7.5px;">Y</span>
<span class="t" style="left:146px;top:62.5px;font-size:7.5px;">X</span>
<div class="abs" style="left:12px;top:87px;width:206px;height:11px;background:#0078d7;outline:1px dotted #e0a060;outline-offset:-1px"></div>
<span class="t" style="left:13px;top:76.5px;font-size:7.6px;">History point ...</span>
<span class="t" style="left:72px;top:76px;font-size:8.5px;"><small>XY-</small>剪应力</span>
<span class="t" style="left:146px;top:76px;font-size:8.5px;"><small>XY-</small>剪应变</span>
<span class="t" style="left:13px;top:88.5px;font-size:7.6px;color:#fff;">History point</span>
<span class="t" style="left:72px;top:88px;font-size:8.5px;color:#fff;"><small>X-</small>加速度</span>
<span class="t" style="left:146px;top:88px;font-size:8.5px;color:#fff;">时间</span>
<span class="t" style="left:13px;top:100.5px;font-size:7.6px;">Piezometer 2</span>
<span class="t" style="left:72px;top:100px;font-size:8.5px;">水压</span>
<span class="t" style="left:146px;top:100px;font-size:8.5px;">时间</span>
<span class="t" style="left:8px;top:175px;font-size:8.5px;">名称<small>(<u>N</u>)</small>:</span>
<div class="abs" style="left:52px;top:172.500px;width:167px;height:13px;background:#fff;border:1px solid #7a7a7a"></div>
<span class="t" style="left:54px;top:175.5px;font-size:7.6px;">History point</span>
<span class="t" style="left:8px;top:193.5px;font-size:8.5px;">种类:</span>
<div class="btn" style="left:52px;top:190.6px;width:167px;height:14px"></div>
<svg class="abs" style="left:209px;top:195.6px" width="8" height="5"><path d="M0.500,0.500 L3.500,3.500 L6.500,0.500" fill="none" stroke="#505050" stroke-width=".9"/></svg>
<span class="t" style="left:54.5px;top:193.6px;font-size:8.5px;">历时点</span>
<div class="btn" style="left:116.5px;top:209.5px;width:101.4px;height:13.8px"></div>
<span class="t" style="left:145px;top:212px;font-size:8.5px;">设定位置...</span>
<div class="btn" style="left:10px;top:247px;width:85.2px;height:14.6px"></div>
<svg class="abs" style="left:85.2px;top:252.3px" width="8" height="5"><path d="M0.500,0.500 L3.500,3.500 L6.500,0.500" fill="none" stroke="#505050" stroke-width=".9"/></svg>
<span class="t" style="left:12.5px;top:250px;font-size:8.5px;">加速度</span>
<div class="btn" style="left:99px;top:247px;width:120px;height:14.6px"></div>
<svg class="abs" style="left:209px;top:252.3px" width="8" height="5"><path d="M0.500,0.500 L3.500,3.500 L6.500,0.500" fill="none" stroke="#505050" stroke-width=".9"/></svg>
<span class="t" style="left:101.5px;top:250px;font-size:8.5px;"><small>X-</small>加速度</span>
<span class="t" style="left:8px;top:268.5px;font-size:8.5px;">与</span>
<div class="btn" style="left:22.4px;top:265.3px;width:150.2px;height:14.6px"></div>
<svg class="abs" style="left:162.6px;top:270.6px" width="8" height="5"><path d="M0.500,0.500 L3.500,3.500 L6.500,0.500" fill="none" stroke="#505050" stroke-width=".9"/></svg>
<span class="t" style="left:24.9px;top:268.3px;font-size:8.5px;">时间</span>
<div class="btn" style="left:178px;top:265.3px;width:41px;height:14.6px"></div>
<svg class="abs" style="left:209px;top:270.6px" width="8" height="5"><path d="M0.500,0.500 L3.500,3.500 L6.500,0.500" fill="none" stroke="#505050" stroke-width=".9"/></svg>
<span class="t" style="left:180.5px;top:268.3px;font-size:8.5px;">秒</span>
<div class="abs" style="left:227.500px;top:37px;width:1px;height:366px;background:#c8c8c8"></div>
<div class="abs" style="left:12px;top:394.500px;width:9px;height:9px;background:#fff;border:1px solid #333"></div>
<span class="t" style="left:22.5px;top:395px;font-size:8px;"><small>Y</small>求和与<small>X</small>平均<small>(<u>S</u>)</small></span>
<div class="abs" style="left:8px;top:409.800px;width:601px;height:1px;background:#d0d0d0"></div>
<div class="btn dis" style="left:9.4px;top:417px;width:53.4px;height:14.8px"></div>
<span class="t" style="left:22px;top:419.6px;font-size:8.5px;color:#8a8a8a;">撤消</span>
<div class="abs" style="left:51px;top:420px;width:1px;height:9px;background:#a0a0a0"></div><svg class="abs" style="left:54px;top:423px" width="6" height="4"><path d="M0,0 h5 l-2.500,3 z" fill="#707070"/></svg>
<div class="btn dis" style="left:69.6px;top:417px;width:54px;height:14.8px"></div>
<span class="t" style="left:82px;top:419.6px;font-size:8.5px;color:#8a8a8a;">重做</span>
<div class="abs" style="left:112px;top:420px;width:1px;height:9px;background:#a0a0a0"></div><svg class="abs" style="left:115px;top:423px" width="6" height="4"><path d="M0,0 h5 l-2.500,3 z" fill="#707070"/></svg>
<div class="btn" style="left:130.2px;top:417px;width:48.6px;height:14.8px"></div>
<span class="t" style="left:140px;top:419.6px;font-size:8.5px;">帮助<small>(<u>H</u>)</small></span>
<div class="btn" style="left:234px;top:417px;width:56.6px;height:14.8px"></div>
<span class="t" style="left:248px;top:419.6px;font-size:8.5px;">更多</span>
<svg class="abs" style="left:282px;top:423px" width="6" height="4"><path d="M0,0 h5.500 l-2.750,3.200 z" fill="#000"/></svg>
<div class="btn" style="left:568px;top:417px;width:42.7px;height:14.8px"></div>
<span class="t" style="left:575px;top:419.6px;font-size:8.5px;">关闭<small>(<u>C</u>)</small></span>
<svg class="abs" style="left:608px;top:427px" width="12" height="12"><path d="M11,2 L2,11 M11,5 L5,11 M11,8 L8,11" stroke="#a0a0a0" stroke-width="1"/></svg>
<svg class="abs" style="left:233px;top:353px" width="10" height="10"><rect x=".5" y=".5" width="8.500" height="8.500" fill="#fff" stroke="#333" stroke-width=".9"/></svg>
<span class="t" style="left:244px;top:353.5px;font-size:8.5px;">图例<small>(<u>n</u>)</small></span>
<svg class="abs" style="left:309.7px;top:353px" width="10" height="10"><rect x=".5" y=".5" width="8.500" height="8.500" fill="#fff" stroke="#333" stroke-width=".9"/><path d="M2,4.500 l2,2 l3.500,-4.200" fill="none" stroke="#222" stroke-width=".9"/></svg>
<span class="t" style="left:321px;top:353.5px;font-size:8.5px;">使用自动比例</span>
<svg class="abs" style="left:233px;top:371.2px" width="10" height="10"><rect x=".5" y=".5" width="8.500" height="8.500" fill="#fff" stroke="#333" stroke-width=".9"/><path d="M2,4.500 l2,2 l3.500,-4.200" fill="none" stroke="#222" stroke-width=".9"/></svg>
<span class="t" style="left:244px;top:372px;font-size:8.5px;">自动刷新</span>
<span class="t" style="left:310.6px;top:371.5px;font-size:8px;">X轴摆幅:</span>
<div class="abs" style="left:310px;top:382.500px;width:48px;height:13px;background:#f0f0f0;border:1px solid #d4d4d4"></div>
<span class="t" style="left:361px;top:386px;font-size:8.5px;">至</span>
<div class="abs" style="left:373.500px;top:382.500px;width:48px;height:13px;background:#f0f0f0;border:1px solid #d4d4d4"></div>
<div class="btn dis" style="left:234px;top:386px;width:57px;height:17.6px"></div>
<svg class="abs" style="left:246px;top:389px" width="12" height="12" viewBox="0 0 12 12"><path d="M1.500,5 A4.500,4.500 0 0 1 10,3.500 M10.500,7 A4.500,4.500 0 0 1 2,8.500" fill="none" stroke="#8a8a8a" stroke-width="1"/><path d="M10.500,1 V4 H7.500 M1.500,11 V8 H4.500" fill="none" stroke="#8a8a8a" stroke-width="1"/></svg>
<span class="t" style="left:262px;top:390.5px;font-size:8.5px;color:#8a8a8a;">刷新</span>
<div class="abs" style="left:234px;top:35px;width:378px;height:311px;background:#fff;border-top:2px solid #8c8c8c;border-left:1.500px solid #8c8c8c"></div>
<svg class="abs" style="left:234px;top:35px" width="378" height="311" viewBox="1034 35 378 311">
<path d="M1133.5,61.3 V294.1 M1174.5,61.3 V294.1 M1216.5,61.3 V294.1 M1257.5,61.3 V294.1 M1298.5,61.3 V294.1 M1339.5,61.3 V294.1 M1380.5,61.3 V294.1 M1092.7,61.5 H1380.9 M1092.7,119.5 H1380.9 M1092.7,178.5 H1380.9 M1092.7,236.5 H1380.9" fill="none" stroke="#00ffff" stroke-width="1"/>
<path d="M1092.7,178.5 H1380.4" stroke="#203838" stroke-width="1" stroke-dasharray="2 2"/>
<polyline points="1092.7,177.7 1093.3,182.7 1093.8,180.3 1094.4,172.5 1094.9,170.1 1095.5,169.8 1096,177.2 1096.6,182.2 1097.1,176.9 1097.7,172.1 1098.2,172.4 1098.8,178.3 1099.3,182 1099.9,184 1100.4,180.1 1101,179.9 1101.6,179.9 1102.1,177.2 1102.7,170.1 1103.2,169.6 1103.8,178.1 1104.3,180.4 1104.9,179.5 1105.4,173.9 1106,172.3 1106.5,179.1 1107.1,182.8 1107.6,185.7 1108.2,177.6 1108.7,172.9 1109.3,170.5 1109.9,178.1 1110.4,181.5 1111,177.9 1111.5,174.1 1112.1,172.5 1112.6,179.8 1113.2,182.8 1113.7,177.7 1114.3,176.2 1114.8,177.4 1115.4,181.7 1115.9,182.7 1116.5,180.2 1117,175.6 1117.6,171.9 1118.2,176.9 1118.7,177.6 1119.3,178.5 1119.8,180 1120.4,179.1 1120.9,176.6 1121.5,168.3 1122,165.7 1122.6,172.7 1123.1,186.1 1123.7,190.5 1124.2,189.3 1124.8,180.6 1125.3,171 1125.9,169 1126.4,160.2 1127,166 1127.6,169.6 1128.1,177.4 1128.7,189.4 1129.2,189.6 1129.8,188.2 1130.3,185.8 1130.9,194 1131.4,185 1132,169.3 1132.5,168.6 1133.1,175.1 1133.6,182.2 1134.2,186.9 1134.7,183.1 1135.3,178.8 1135.9,180.9 1136.4,182.4 1137,177.8 1137.5,169 1138.1,161.1 1138.6,162.6 1139.2,178.7 1139.7,194.2 1140.3,164.3 1140.8,150.9 1141.4,165.7 1141.9,170.1 1142.5,175.3 1143,182.5 1143.6,185.1 1144.2,182.5 1144.7,184.7 1145.3,191.7 1145.8,184 1146.4,183.7 1146.9,194.1 1147.5,191.3 1148,172.1 1148.6,162.1 1149.1,175.2 1149.7,196.6 1150.2,195.8 1150.8,183.3 1151.3,159.1 1151.9,192 1152.5,206.2 1153,190.5 1153.6,191.1 1154.1,204.5 1154.7,189.7 1155.2,185.7 1155.8,184.7 1156.3,175.9 1156.9,164.3 1157.4,150.9 1158,165.7 1158.5,191.9 1159.1,181.4 1159.6,162.8 1160.2,159.2 1160.8,164.3 1161.3,179 1161.9,166.1 1162.4,154.4 1163,167.2 1163.5,178.7 1164.1,174 1164.6,169.4 1165.2,172.2 1165.7,183.8 1166.3,195.1 1166.8,192.3 1167.4,179 1167.9,162 1168.5,158.7 1169.1,161 1169.6,176.5 1170.2,186.3 1170.7,189.9 1171.3,202.1 1171.8,189.1 1172.4,194.3 1172.9,194 1173.5,182.9 1174,161.1 1174.6,161 1175.1,160.8 1175.7,162.3 1176.2,146.9 1176.8,163.8 1177.4,195.9 1177.9,191.9 1178.5,183.5 1179,170.9 1179.6,171.4 1180.1,187.9 1180.7,198.1 1181.2,186.9 1181.8,161.4 1182.3,164.4 1182.9,179.2 1183.4,196.3 1184,191.9 1184.5,171.2 1185.1,161.3 1185.6,166.9 1186.2,156.2 1186.8,168 1187.3,175.7 1187.9,166.1 1188.4,199.2 1189,220.8 1189.5,197.1 1190.1,168.3 1190.6,161.3 1191.2,146.9 1191.7,163.8 1192.3,196.3 1192.8,179.9 1193.4,161 1193.9,148 1194.5,164.3 1195.1,186.9 1195.6,177.8 1196.2,173.3 1196.7,186 1197.3,195.7 1197.8,187.9 1198.4,164.4 1198.9,160.5 1199.5,162.9 1200,183.9 1200.6,196.4 1201.1,188.9 1201.7,179.5 1202.2,179 1202.8,180.8 1203.4,170.9 1203.9,162.4 1204.5,169.3 1205,166.4 1205.6,155 1206.1,167.5 1206.7,170.1 1207.2,161 1207.8,171.4 1208.3,203.3 1208.9,228.9 1209.4,200.7 1210,174.2 1210.5,201.3 1211.1,224.8 1211.7,198.9 1212.2,173.1 1212.8,146.6 1213.3,115.4 1213.9,149.7 1214.4,151.5 1215,165.9 1215.5,172.9 1216.1,186.4 1216.6,195.2 1217.2,185.6 1217.7,158.5 1218.3,158.3 1218.8,182.6 1219.4,196.2 1220,197 1220.5,206.8 1221.1,190.8 1221.6,173.5 1222.2,173.5 1222.7,170.1 1223.3,168.3 1223.8,167.1 1224.4,169.4 1224.9,168.1 1225.5,158.5 1226,169.1 1226.6,184.6 1227.1,190 1227.7,195.1 1228.3,191.7 1228.8,205.6 1229.4,190.3 1229.9,158 1230.5,168.1 1231,184.4 1231.6,190.7 1232.1,168.1 1232.7,158.5 1233.2,160.2 1233.8,177.3 1234.3,195.9 1234.9,198.5 1235.4,192.5 1236,168.2 1236.6,157.2 1237.1,165.2 1237.7,160.2 1238.2,169.8 1238.8,189.9 1239.3,185.6 1239.9,179.2 1240.4,166 1241,156.9 1241.5,189.9 1242.1,202.1 1242.6,193.3 1243.2,196 1243.7,196.9 1244.3,189.8 1244.8,182.6 1245.4,171.5 1246,161.3 1246.5,160 1247.1,146.9 1247.6,163.8 1248.2,169 1248.7,160.2 1249.3,169.8 1249.8,191.1 1250.4,185.6 1250.9,217.6 1251.5,257.4 1252,213.6 1252.6,186.4 1253.1,195.2 1253.7,185.6 1254.3,157.3 1254.8,137 1255.4,159.4 1255.9,149.2 1256.5,120.7 1257,152 1257.6,174.8 1258.1,171.9 1258.7,175.1 1259.2,203.9 1259.8,230.1 1260.3,201.3 1260.9,218.4 1261.4,259.2 1262,214.4 1262.6,183.5 1263.1,189.3 1263.7,182.9 1264.2,151.2 1264.8,124.7 1265.3,153.9 1265.9,174.8 1266.4,186.4 1267,195.2 1267.5,185.6 1268.1,163.7 1268.6,149.8 1269.2,193.1 1269.7,208.5 1270.3,191.6 1270.9,197.2 1271.4,188.7 1272,159.6 1272.5,159.3 1273.1,162.1 1273.6,165.5 1274.2,153.3 1274.7,166.7 1275.3,166.1 1275.8,167.4 1276.4,185.5 1276.9,193.6 1277.5,203.9 1278,189.5 1278.6,170.8 1279.2,169.7 1279.7,195.2 1280.3,212.6 1280.8,193.4 1281.4,166.4 1281.9,155 1282.5,167.5 1283,157.2 1283.6,158.8 1284.1,157.7 1284.7,182.9 1285.2,166.6 1285.8,155.6 1286.3,167.7 1286.9,185.2 1287.5,184.4 1288,172.1 1288.6,164.8 1289.1,167 1289.7,169 1290.2,182.5 1290.8,187.8 1291.3,185.1 1291.9,186.6 1292.4,187.9 1293,190.2 1293.5,191.7 1294.1,184 1294.6,166.3 1295.2,165.4 1295.7,175.4 1296.3,178.4 1296.9,178.5 1297.4,187.1 1298,189.8 1298.5,170.1 1299.1,162.6 1299.6,167.9 1300.2,175.8 1300.7,189.6 1301.3,189.4 1301.8,188.2 1302.4,198.7 1302.9,187.1 1303.5,177.3 1304,189.2 1304.6,187.7 1305.2,173.4 1305.7,165.5 1306.3,173.7 1306.8,171.9 1307.4,166.1 1307.9,172.5 1308.5,176.4 1309,172.3 1309.6,170.9 1310.1,171.4 1310.7,176.9 1311.2,178.9 1311.8,180.4 1312.3,179.6 1312.9,180.1 1313.5,176.6 1314,174.7 1314.6,175.9 1315.1,177.8 1315.7,184.1 1316.2,190.5 1316.8,183.5 1317.3,175.6 1317.9,175.4 1318.4,176.6 1319,178.5 1319.5,176.7 1320.1,173.3 1320.6,169 1321.2,173.8 1321.8,177.1 1322.3,178.1 1322.9,175.9 1323.4,181.6 1324,183.9 1324.5,181.9 1325.1,177.6 1325.6,172.1 1326.2,171.4 1326.7,172 1327.3,176.1 1327.8,180.7 1328.4,184.1 1328.9,187.6 1329.5,182.6 1330.1,180.7 1330.6,175.6 1331.2,173.2 1331.7,172.7 1332.3,172.3 1332.8,173.1 1333.4,180.8 1333.9,174.8 1334.5,171.9 1335,175.1 1335.6,177.8 1336.1,173.2 1336.7,172.4 1337.2,174.2 1337.8,175 1338.4,176.7 1338.9,175.8 1339.5,180.3 1340,181.4 1340.6,182 1341.1,180.1 1341.7,174.9 1342.2,174 1342.8,176.8 1343.3,179 1343.9,179.5 1344.4,177.7 1345,175.9 1345.5,175.2 1346.1,176.6 1346.7,180 1347.2,181.5 1347.8,185.3 1348.3,181.1 1348.9,176.1 1349.4,179.1 1350,180.8 1350.5,173.3 1351.1,169 1351.6,173.8 1352.2,173.4 1352.7,174.3 1353.3,177.4 1353.8,177.8 1354.4,179.3 1354.9,180.1 1355.5,178.9 1356.1,177.5 1356.6,175.5 1357.2,173.5 1357.7,176.7 1358.3,180.3 1358.8,179.8 1359.4,179.6 1359.9,173.8 1360.5,174.4 1361,177.1 1361.6,178.2 1362.1,178.1 1362.7,179 1363.2,179.2 1363.8,181.7 1364.4,178.6 1364.9,175.8 1365.5,174.8 1366,171.9 1366.6,175.1 1367.1,176.5 1367.7,176.1 1368.2,173.8 1368.8,175.6 1369.3,180.9 1369.9,180.5 1370.4,179.8 1371,180.1 1371.5,179.8 1372.1,179 1372.7,179.3 1373.2,174.6 1373.8,174.1 1374.3,176.7 1374.9,174.4 1375.4,174.7 1376,174.4 1376.5,178.7 1377.1,179.8 1377.6,176.2 1378.2,174.8 1378.7,173.3 1379.3,173.5 1379.8,177.6 1380.4,178.2" fill="none" stroke="#7c0000" stroke-width=".85" stroke-linejoin="round"/>
<path d="M1092.2,60.3 V294.3 H1381.2" fill="none" stroke="#000" stroke-width="1.600"/>
<path d="M1089.2,61.3 h8 M1089.2,119.5 h8 M1089.2,177.7 h8 M1089.2,235.9 h8 M1089.2,294.1 h8 M1133.8,294.1 v-5 M1174.9,294.1 v-5 M1216,294.1 v-5 M1257.1,294.1 v-5 M1298.2,294.1 v-5 M1339.3,294.1 v-5 M1380.4,294.1 v-5" stroke="#000" stroke-width="1.400"/>
<g font-family="'Liberation Serif',serif" font-size="12.8" fill="#111">
<text x="1087.1" y="65.6" text-anchor="end">2</text>
<text x="1087.1" y="123.8" text-anchor="end">1</text>
<text x="1087.1" y="182" text-anchor="end">0</text>
<text x="1087.1" y="240.2" text-anchor="end">−1</text>
<text x="1087.1" y="298.4" text-anchor="end">−2</text>
<text x="1092.7" y="310.3" text-anchor="middle">0</text>
<text x="1133.8" y="310.3" text-anchor="middle">2</text>
<text x="1174.9" y="310.3" text-anchor="middle">4</text>
<text x="1216" y="310.3" text-anchor="middle">6</text>
<text x="1257.1" y="310.3" text-anchor="middle">8</text>
<text x="1299.2" y="310.3" text-anchor="middle">10</text>
<text x="1340.3" y="310.3" text-anchor="middle">12</text>
<text x="1381.4" y="310.3" text-anchor="middle">14</text>
</g>
<g font-family="'Liberation Mono',monospace" font-size="13" fill="#222">
<text transform="translate(1217.3,333.6) scale(.82,1)" text-anchor="middle">Time (sec)</text>
<text transform="translate(1061,172) rotate(-90) scale(.82,1)" text-anchor="middle">X-Acceleration (g)</text>
</g></svg>
</div>
<div class="abs" style="left:1420px;top:0;width:11px;height:172px;background:#fff"></div>
<div class="abs" style="left:1420px;top:116px;width:5px;height:1px;background:#d4d4d4"></div>
<div class="abs" style="left:1420px;top:172px;width:5px;height:2px;background:#6e6e6e"></div>
</body></html>
